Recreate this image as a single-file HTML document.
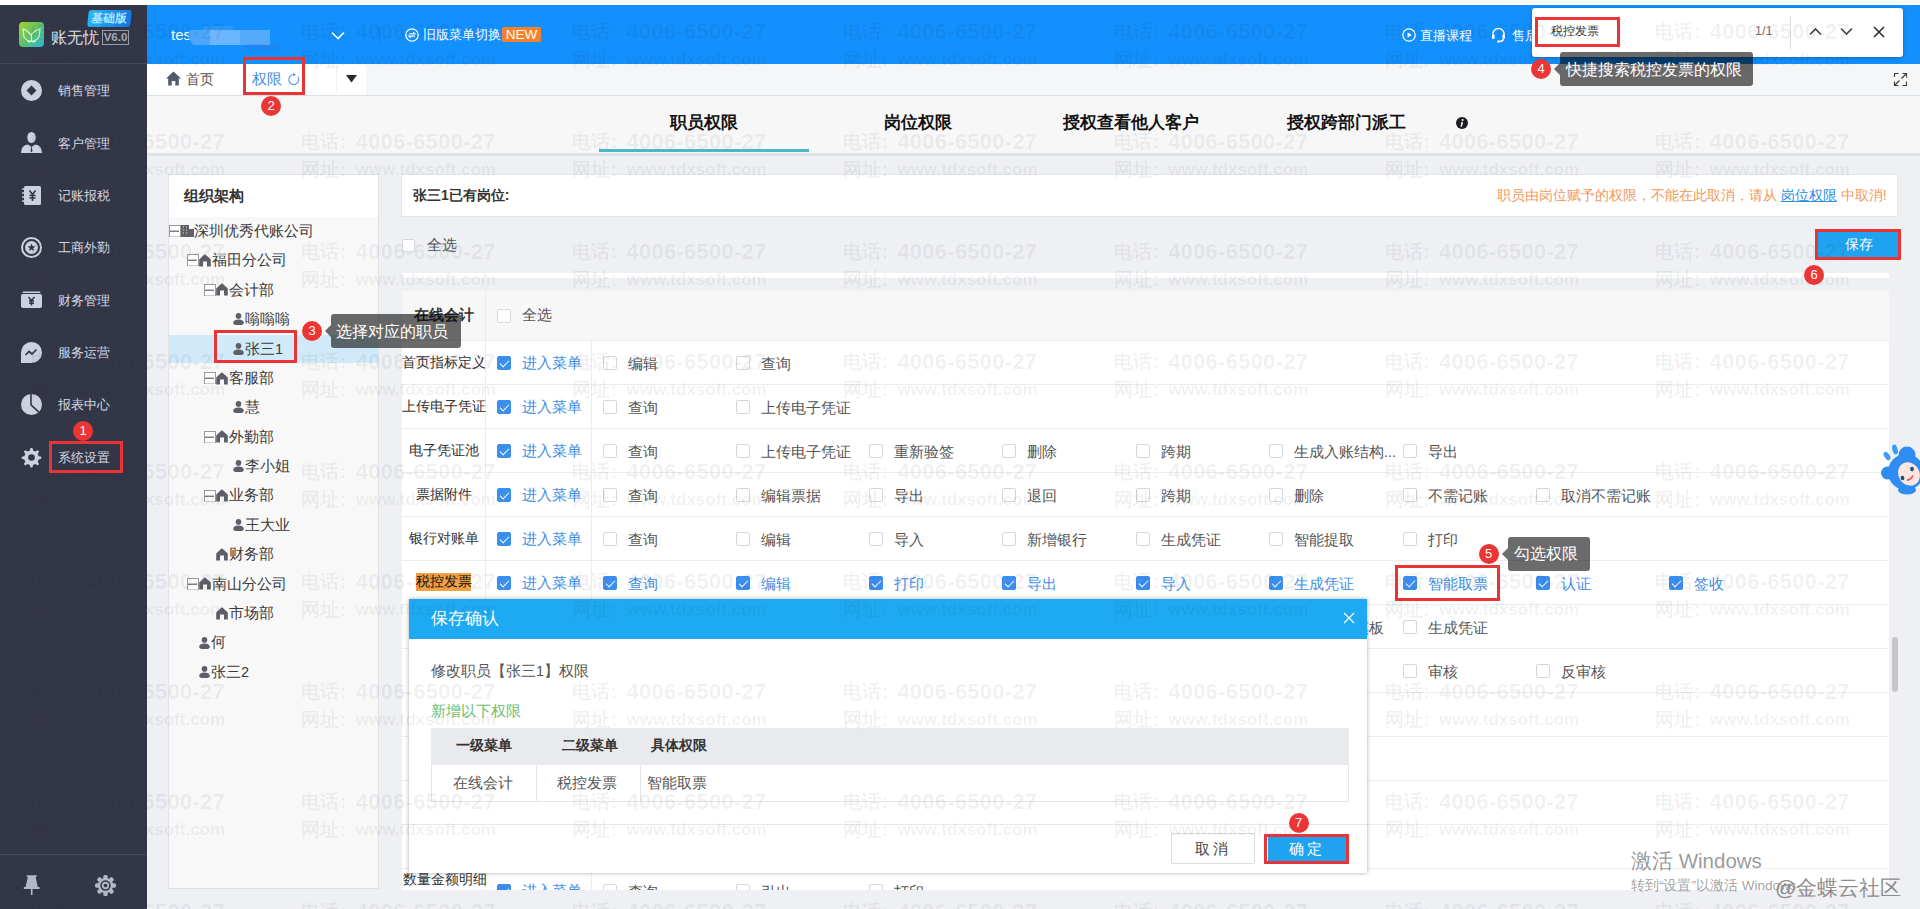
<!DOCTYPE html><html><head><meta charset="utf-8"><style>
*{box-sizing:border-box;margin:0;padding:0}
html,body{width:1920px;height:909px;overflow:hidden;background:#eef0f4;font-family:"Liberation Sans",sans-serif;color:#333;position:relative}
.a{position:absolute;white-space:nowrap}
.cb{position:absolute;width:14px;height:14px;border:1px solid #d3d6db;border-radius:2px;background:#fff}
.cb.on{background:#3b8ff0;border-color:#3b8ff0}
.cb.on::after{content:"";position:absolute;left:4px;top:1px;width:4px;height:8px;border:solid #fff;border-width:0 1.6px 1.6px 0;transform:rotate(45deg)}
.rb{position:absolute;border:3px solid #e83434}
.dot{position:absolute;width:20px;height:20px;border-radius:50%;background:#ec3535;color:#fff;font-size:13px;line-height:20px;text-align:center}
.tip{position:absolute;background:rgba(0,0,0,0.58);color:#fff;border-radius:3px;font-size:16px;line-height:32px;padding:0 0 0 6px;white-space:nowrap}
.tip::before{content:"";position:absolute;left:-6px;top:50%;margin-top:-6px;border:6px solid transparent;border-left:0;border-right-color:rgba(0,0,0,0.58)}
.wm{position:absolute;white-space:nowrap;color:rgba(0,0,0,0.075);pointer-events:none}
.t{position:absolute;white-space:nowrap;line-height:1}
</style></head><body>
<div class="a" style="left:0px;top:0px;width:1920px;height:5px;background:#fff;"></div>
<div class="a" style="left:0px;top:5px;width:147px;height:904px;background:#333646;"></div>
<div class="a" style="left:0px;top:63px;width:147px;height:1px;background:#454958;"></div>
<div class="a" style="left:0px;top:854px;width:147px;height:1px;background:#454958;"></div>
<div class="a" style="left:19px;top:22px;width:25px;height:25px;border-radius:4px;background:linear-gradient(135deg,#a6d42a,#5cc26a 50%,#2ab7d8)"></div>
<svg class="a" style="left:19px;top:22px" width="25" height="25" viewBox="0 0 25 25"><path d="M4 7 Q8 8 12 13 Q16 8 21 7 L20 15 Q16 20 12.5 19 Q9 20 5 15 Z M12.5 13 V19 M8 18 L10 20 L12.5 19 L15 20 L17 18" fill="none" stroke="#e9f7d0" stroke-width="1.1"/></svg>
<div class="a" style="left:51px;top:26.8px;height:22.4px;line-height:22.4px;font-size:16px;color:#dfe0e6;font-weight:normal;">账无忧</div>
<div class="a" style="left:102px;top:30px;width:27px;height:15px;border:1px solid #9a9ca8;color:#a9acb6;font-size:11.5px;line-height:13px;text-align:center;font-weight:bold">V6.0</div>
<div class="a" style="left:88px;top:10px;width:43px;height:17px;border-radius:3px;background:linear-gradient(100deg,#27b8f6,#1576df);color:#b5e6ff;font-size:11.5px;line-height:17px;text-align:center;font-weight:bold;transform:skewX(-6deg)">基础版</div>
<svg class="a" style="left:21px;top:80.0px" width="21" height="21" viewBox="0 0 21 21"><circle cx="10.5" cy="10.5" r="10.5" fill="#cdd1de"/><path d="M10.5 5.5 L15.5 10.5 L10.5 15.5 L5.5 10.5Z" fill="#333646"/></svg>
<div class="a" style="left:58px;top:83.0px;height:17.5px;line-height:17.5px;font-size:12.5px;color:#d5d9e5;font-weight:normal;">销售管理</div>
<svg class="a" style="left:21px;top:132.4px" width="21" height="21" viewBox="0 0 21 21"><ellipse cx="10.5" cy="5.5" rx="4.2" ry="5.5" fill="#cdd1de"/><path d="M0 21 Q0 13 7 12.5 L10.5 15 L14 12.5 Q21 13 21 21Z" fill="#cdd1de"/><path d="M10.5 13.5 L9.5 19 L10.5 20.5 L11.5 19Z" fill="#333646"/></svg>
<div class="a" style="left:58px;top:135.5px;height:17.5px;line-height:17.5px;font-size:12.5px;color:#d5d9e5;font-weight:normal;">客户管理</div>
<svg class="a" style="left:21px;top:184.8px" width="21" height="21" viewBox="0 0 21 21"><rect x="3" y="1" width="17" height="19" rx="1.5" fill="#cdd1de"/><path d="M1 4h4M1 8h4M1 12h4M1 16h4" stroke="#cdd1de" stroke-width="1.5"/><path d="M8.5 5.5 L11.5 9.5 L14.5 5.5 M11.5 9.5 V16 M8.5 10.5 H14.5 M8.5 13 H14.5" fill="none" stroke="#333646" stroke-width="1.6"/></svg>
<div class="a" style="left:58px;top:187.9px;height:17.5px;line-height:17.5px;font-size:12.5px;color:#d5d9e5;font-weight:normal;">记账报税</div>
<svg class="a" style="left:21px;top:237.2px" width="21" height="21" viewBox="0 0 21 21"><circle cx="10.5" cy="10.5" r="9.5" fill="none" stroke="#cdd1de" stroke-width="2"/><circle cx="10.5" cy="10.5" r="6.5" fill="#cdd1de"/><path d="M10.5 6.5 L11.6 9.3 L14.5 9.4 L12.2 11.2 L13 14 L10.5 12.4 L8 14 L8.8 11.2 L6.5 9.4 L9.4 9.3Z" fill="#333646"/></svg>
<div class="a" style="left:58px;top:240.2px;height:17.5px;line-height:17.5px;font-size:12.5px;color:#d5d9e5;font-weight:normal;">工商外勤</div>
<svg class="a" style="left:21px;top:289.6px" width="21" height="21" viewBox="0 0 21 21"><rect x="1.5" y="1.5" width="18" height="1.6" rx="0.8" fill="#cdd1de"/><rect x="0" y="4" width="21" height="14" rx="2" fill="#cdd1de"/><path d="M7.5 7 L10.5 10.5 L13.5 7 M10.5 10.5 V15.5 M8 11 H13 M8 13.3 H13" fill="none" stroke="#333646" stroke-width="1.5"/></svg>
<div class="a" style="left:58px;top:292.7px;height:17.5px;line-height:17.5px;font-size:12.5px;color:#d5d9e5;font-weight:normal;">财务管理</div>
<svg class="a" style="left:21px;top:342.0px" width="21" height="21" viewBox="0 0 21 21"><path d="M10.5 0 A10.5 10.5 0 1 1 10.5 21 H0 V10.5 A10.5 10.5 0 0 1 10.5 0Z" fill="#cdd1de"/><path d="M4.5 13 L8 9.5 L11 12 L15.5 7.5" fill="none" stroke="#333646" stroke-width="1.7"/></svg>
<div class="a" style="left:58px;top:345.1px;height:17.5px;line-height:17.5px;font-size:12.5px;color:#d5d9e5;font-weight:normal;">服务运营</div>
<svg class="a" style="left:21px;top:394.4px" width="21" height="21" viewBox="0 0 21 21"><circle cx="10.5" cy="10.5" r="10.5" fill="#cdd1de"/><path d="M10 0 V10.8 L17.8 18.2" fill="none" stroke="#333646" stroke-width="1.6"/></svg>
<div class="a" style="left:58px;top:397.4px;height:17.5px;line-height:17.5px;font-size:12.5px;color:#d5d9e5;font-weight:normal;">报表中心</div>
<svg class="a" style="left:21px;top:446.8px" width="21" height="21" viewBox="0 0 21 21"><path d="M10.5 1 l2 0 l0.6 2.6 l2.3 1 l2.3-1.4 l1.4 1.4 l-1.4 2.3 l1 2.3 l2.6 0.6 l0 2 l-2.6 0.6 l-1 2.3 l1.4 2.3 l-1.4 1.4 l-2.3-1.4 l-2.3 1 l-0.6 2.6 l-2 0 l-0.6-2.6 l-2.3-1 l-2.3 1.4 l-1.4-1.4 l1.4-2.3 l-1-2.3 l-2.6-0.6 l0-2 l2.6-0.6 l1-2.3 l-1.4-2.3 l1.4-1.4 l2.3 1.4 l2.3-1 Z" fill="#cdd1de" transform="translate(-1,0)"/><circle cx="10.5" cy="10.5" r="3.3" fill="#333646"/></svg>
<div class="a" style="left:58px;top:449.9px;height:17.5px;line-height:17.5px;font-size:12.5px;color:#d5d9e5;font-weight:normal;">系统设置</div>
<svg class="a" style="left:23px;top:874px" width="18" height="22" viewBox="0 0 18 22"><path d="M3.8 1.2 H13.6 V3 H12.6 L14.8 13 H16.6 V15 H0.8 V13 H2.6 L4.8 3 H3.8Z" fill="#b3b8c4"/><rect x="7.9" y="15" width="1.6" height="6" fill="#b3b8c4"/></svg>
<svg class="a" style="left:94.5px;top:875px" width="21" height="21" viewBox="0 0 21 21"><rect x="8.3" y="0" width="4.4" height="5" rx="1.6" transform="rotate(0 10.5 10.5)" fill="#b3b8c4"/><rect x="8.3" y="0" width="4.4" height="5" rx="1.6" transform="rotate(45 10.5 10.5)" fill="#b3b8c4"/><rect x="8.3" y="0" width="4.4" height="5" rx="1.6" transform="rotate(90 10.5 10.5)" fill="#b3b8c4"/><rect x="8.3" y="0" width="4.4" height="5" rx="1.6" transform="rotate(135 10.5 10.5)" fill="#b3b8c4"/><rect x="8.3" y="0" width="4.4" height="5" rx="1.6" transform="rotate(180 10.5 10.5)" fill="#b3b8c4"/><rect x="8.3" y="0" width="4.4" height="5" rx="1.6" transform="rotate(225 10.5 10.5)" fill="#b3b8c4"/><rect x="8.3" y="0" width="4.4" height="5" rx="1.6" transform="rotate(270 10.5 10.5)" fill="#b3b8c4"/><rect x="8.3" y="0" width="4.4" height="5" rx="1.6" transform="rotate(315 10.5 10.5)" fill="#b3b8c4"/><circle cx="10.5" cy="10.5" r="7.6" fill="#b3b8c4"/><circle cx="10.5" cy="10.5" r="5.2" fill="#333646"/><circle cx="10.5" cy="10.5" r="3.7" fill="#b3b8c4"/><circle cx="10.5" cy="10.5" r="1.8" fill="#333646"/></svg>
<div class="a" style="left:147px;top:5px;width:1773px;height:59px;background:#1290fd;"></div>
<div class="a" style="left:171px;top:25px;font-size:15px;line-height:20px;color:#fff">tes</div>
<div class="a" style="left:189px;top:30px;width:21px;height:15px;background:#4ea5fc;clip-path:polygon(0 0,100% 0,100% 100%,20% 100%,0 60%)"></div>
<div class="a" style="left:210px;top:30px;width:30px;height:15px;background:#6cb6fe;"></div>
<div class="a" style="left:240px;top:30px;width:30px;height:15px;background:#56aafc;"></div>
<div class="a" style="left:203px;top:26px;width:30px;height:4px;background:#2a97fd;"></div>
<div class="a" style="left:245px;top:45px;width:35px;height:4px;background:rgba(60,110,200,0.35);filter:blur(1.5px)"></div>
<svg class="a" style="left:331px;top:31px" width="14" height="9" viewBox="0 0 14 9"><path d="M1 1.5 L7 7.5 L13 1.5" fill="none" stroke="#fff" stroke-width="1.6"/></svg>
<div class="a" style="left:379px;top:27px;width:1px;height:15px;background:rgba(0,0,0,0.12);"></div>
<svg class="a" style="left:405px;top:27.5px" width="14" height="14" viewBox="0 0 14 14"><circle cx="7" cy="7" r="6.2" fill="none" stroke="#fff" stroke-width="1.3"/><path d="M4 5.8 H10 L8.3 4.2 M10 8.2 H4 L5.7 9.8" fill="none" stroke="#fff" stroke-width="1.2"/></svg>
<div class="a" style="left:423px;top:26.6px;height:17.8px;line-height:17.8px;font-size:12.7px;color:#fff;font-weight:normal;">旧版菜单切换</div>
<div class="a" style="left:502px;top:27px;width:39px;height:15px;background:#f5812a;border-radius:2px;color:#fff;font-size:13.5px;line-height:15px;text-align:center">NEW</div>
<svg class="a" style="left:1402px;top:28px" width="14" height="14" viewBox="0 0 14 14"><circle cx="7" cy="7" r="6.2" fill="none" stroke="#fff" stroke-width="1.3"/><path d="M5.5 4.3 L9.8 7 L5.5 9.7Z" fill="#fff"/></svg>
<div class="a" style="left:1420px;top:26.5px;height:17.9px;line-height:17.9px;font-size:12.8px;color:#fff;font-weight:normal;">直播课程</div>
<svg class="a" style="left:1491px;top:27px" width="15" height="16" viewBox="0 0 15 16"><path d="M2 9 V7 A5.5 5.5 0 0 1 13 7 V9" fill="none" stroke="#fff" stroke-width="1.4"/><rect x="1" y="7.5" width="2.6" height="4.5" rx="1" fill="#fff"/><rect x="11.4" y="7.5" width="2.6" height="4.5" rx="1" fill="#fff"/><path d="M12.5 12 Q12 14.5 8.5 14.5" fill="none" stroke="#fff" stroke-width="1.3"/><circle cx="7.5" cy="14.5" r="1.3" fill="#fff"/></svg>
<div class="a" style="left:1512px;top:26.5px;height:17.9px;line-height:17.9px;font-size:12.8px;color:#fff;font-weight:normal;">售后</div>
<div class="a" style="left:147px;top:64px;width:1773px;height:32px;background:#f5f6f8;"></div>
<div class="a" style="left:147px;top:64px;width:219px;height:31px;background:#fff;"></div>
<div class="a" style="left:147px;top:95px;width:1773px;height:1px;background:#dcdfe5;"></div>
<div class="a" style="left:336px;top:66px;width:1px;height:26px;background:#eef0f3;"></div>
<svg class="a" style="left:166px;top:71px" width="15" height="15" viewBox="0 0 15 15"><path d="M7.5 0.5 L15 7.5 H12.8 V14.5 H9.3 V10 H5.7 V14.5 H2.2 V7.5 H0Z" fill="#535b6a"/></svg>
<div class="a" style="left:186px;top:69.6px;height:19.9px;line-height:19.9px;font-size:14.2px;color:#555;font-weight:normal;">首页</div>
<div class="a" style="left:252px;top:69.3px;height:20.3px;line-height:20.3px;font-size:14.5px;color:#4a8fe0;font-weight:normal;">权限</div>
<svg class="a" style="left:287px;top:73px" width="13" height="13" viewBox="0 0 13 13"><path d="M10.8 3.5 A5 5 0 1 1 6.5 1.5" fill="none" stroke="#5d9ae6" stroke-width="1.2"/><path d="M6 0 L9 1.6 L6.2 3.6Z" fill="#5d9ae6"/></svg>
<svg class="a" style="left:346px;top:75px" width="11" height="8" viewBox="0 0 11 8"><path d="M0 0 H11 L5.5 7.5Z" fill="#2a2a2a"/></svg>
<svg class="a" style="left:1893px;top:72px" width="15" height="15" viewBox="0 0 15 15"><path d="M1.5 5 V1.5 H5.5 M9.5 1.5 H13.5 V5.5 M13.5 1.5 L8.5 6.5 M1.5 9.5 V13.5 H5.5 M1.5 13.5 L6.5 8.5 M13.5 9.5 V13.5 H9.5" fill="none" stroke="#3a3a3a" stroke-width="1.1"/></svg>
<div class="a" style="left:147px;top:96px;width:1773px;height:57px;background:#f7f7f8;"></div>
<div class="a" style="left:147px;top:153px;width:1773px;height:3px;background:#dfe3e9;"></div>
<div class="a" style="left:554px;top:110px;width:300px;text-align:center;font-size:16.5px;line-height:24px;font-weight:bold;color:#111">职员权限</div>
<div class="a" style="left:768px;top:110px;width:300px;text-align:center;font-size:16.5px;line-height:24px;font-weight:bold;color:#111">岗位权限</div>
<div class="a" style="left:981px;top:110px;width:300px;text-align:center;font-size:16.5px;line-height:24px;font-weight:bold;color:#111">授权查看他人客户</div>
<div class="a" style="left:1196px;top:110px;width:300px;text-align:center;font-size:16.5px;line-height:24px;font-weight:bold;color:#111">授权跨部门派工</div>
<div class="a" style="left:599px;top:149px;width:210px;height:3px;background:#4db7c7;"></div>
<svg class="a" style="left:1456px;top:116.7px" width="12" height="12" viewBox="0 0 12 12"><circle cx="6" cy="6" r="6" fill="#1e1e22"/><circle cx="6.6" cy="3.1" r="1" fill="#fff"/><path d="M6.3 5 L5.2 9.6" stroke="#fff" stroke-width="1.5"/></svg>
<div class="a" style="left:168px;top:174px;width:211px;height:715px;background:#f8f8f8;border:1px solid #dfe3e8"></div>
<div class="a" style="left:169px;top:175px;width:209px;height:42px;background:#fff;"></div>
<div class="a" style="left:184px;top:185.6px;height:20.7px;line-height:20.7px;font-size:14.8px;color:#333;font-weight:bold;">组织架构</div>
<div class="a" style="left:169px;top:335px;width:209px;height:28px;background:#d0eafa;"></div>
<svg class="a" style="left:169px;top:225.0px" width="12" height="12" viewBox="0 0 12 12"><rect x="0.5" y="0.5" width="11" height="11.5" fill="#fff" stroke="#9a9a9a" stroke-width="1"/><path d="M1 6.2 H10" stroke="#555" stroke-width="1.1"/></svg>
<svg class="a" style="left:181px;top:225.0px" width="13" height="12" viewBox="0 0 13 12"><rect x="0" y="0" width="8" height="12" fill="#5f6068"/><rect x="8" y="4" width="5" height="8" fill="#5f6068"/><path d="M2 2h1M5 2h1M2 5h1M5 5h1M2 8h1M5 8h1" stroke="#ddd" stroke-width="1"/></svg>
<div class="a" style="left:194px;top:220.8px;height:20.3px;line-height:20.3px;font-size:14.5px;color:#3a3a3a;font-weight:normal;">深圳优秀代账公司</div>
<svg class="a" style="left:187px;top:254.4px" width="12" height="12" viewBox="0 0 12 12"><rect x="0.5" y="0.5" width="11" height="11.5" fill="#fff" stroke="#9a9a9a" stroke-width="1"/><path d="M1 6.2 H10" stroke="#555" stroke-width="1.1"/></svg>
<svg class="a" style="left:198.5px;top:253.9px" width="12" height="13" viewBox="0 0 12 13"><path d="M5.2 0.8 Q5.9 0.2 6.6 0.8 L11.8 5.6 V12.5 H8 V7.6 H4 V12.5 H0.2 V5.6Z" fill="#5d5f66"/></svg>
<div class="a" style="left:212px;top:250.2px;height:20.3px;line-height:20.3px;font-size:14.5px;color:#3a3a3a;font-weight:normal;">福田分公司</div>
<svg class="a" style="left:204px;top:283.8px" width="12" height="12" viewBox="0 0 12 12"><rect x="0.5" y="0.5" width="11" height="11.5" fill="#fff" stroke="#9a9a9a" stroke-width="1"/><path d="M1 6.2 H10" stroke="#555" stroke-width="1.1"/></svg>
<svg class="a" style="left:215.5px;top:283.3px" width="12" height="13" viewBox="0 0 12 13"><path d="M5.2 0.8 Q5.9 0.2 6.6 0.8 L11.8 5.6 V12.5 H8 V7.6 H4 V12.5 H0.2 V5.6Z" fill="#5d5f66"/></svg>
<div class="a" style="left:229px;top:279.7px;height:20.3px;line-height:20.3px;font-size:14.5px;color:#3a3a3a;font-weight:normal;">会计部</div>
<svg class="a" style="left:233px;top:313.2px" width="11" height="12" viewBox="0 0 11 12"><circle cx="5.5" cy="2.9" r="2.8" fill="#5d5f66"/><path d="M0.2 10 Q0.2 6.4 5.5 6.4 Q10.8 6.4 10.8 10 Q10.8 12.3 5.5 12.3 Q0.2 12.3 0.2 10Z" fill="#5d5f66"/></svg>
<div class="a" style="left:245px;top:309.1px;height:20.3px;line-height:20.3px;font-size:14.5px;color:#3a3a3a;font-weight:normal;">嗡嗡嗡</div>
<svg class="a" style="left:233px;top:342.6px" width="11" height="12" viewBox="0 0 11 12"><circle cx="5.5" cy="2.9" r="2.8" fill="#5d5f66"/><path d="M0.2 10 Q0.2 6.4 5.5 6.4 Q10.8 6.4 10.8 10 Q10.8 12.3 5.5 12.3 Q0.2 12.3 0.2 10Z" fill="#5d5f66"/></svg>
<div class="a" style="left:245px;top:338.5px;height:20.3px;line-height:20.3px;font-size:14.5px;color:#3a3a3a;font-weight:normal;">张三1</div>
<svg class="a" style="left:204px;top:372.0px" width="12" height="12" viewBox="0 0 12 12"><rect x="0.5" y="0.5" width="11" height="11.5" fill="#fff" stroke="#9a9a9a" stroke-width="1"/><path d="M1 6.2 H10" stroke="#555" stroke-width="1.1"/></svg>
<svg class="a" style="left:215.5px;top:371.5px" width="12" height="13" viewBox="0 0 12 13"><path d="M5.2 0.8 Q5.9 0.2 6.6 0.8 L11.8 5.6 V12.5 H8 V7.6 H4 V12.5 H0.2 V5.6Z" fill="#5d5f66"/></svg>
<div class="a" style="left:229px;top:367.9px;height:20.3px;line-height:20.3px;font-size:14.5px;color:#3a3a3a;font-weight:normal;">客服部</div>
<svg class="a" style="left:233px;top:401.4px" width="11" height="12" viewBox="0 0 11 12"><circle cx="5.5" cy="2.9" r="2.8" fill="#5d5f66"/><path d="M0.2 10 Q0.2 6.4 5.5 6.4 Q10.8 6.4 10.8 10 Q10.8 12.3 5.5 12.3 Q0.2 12.3 0.2 10Z" fill="#5d5f66"/></svg>
<div class="a" style="left:245px;top:397.2px;height:20.3px;line-height:20.3px;font-size:14.5px;color:#3a3a3a;font-weight:normal;">慧</div>
<svg class="a" style="left:204px;top:430.8px" width="12" height="12" viewBox="0 0 12 12"><rect x="0.5" y="0.5" width="11" height="11.5" fill="#fff" stroke="#9a9a9a" stroke-width="1"/><path d="M1 6.2 H10" stroke="#555" stroke-width="1.1"/></svg>
<svg class="a" style="left:215.5px;top:430.3px" width="12" height="13" viewBox="0 0 12 13"><path d="M5.2 0.8 Q5.9 0.2 6.6 0.8 L11.8 5.6 V12.5 H8 V7.6 H4 V12.5 H0.2 V5.6Z" fill="#5d5f66"/></svg>
<div class="a" style="left:229px;top:426.6px;height:20.3px;line-height:20.3px;font-size:14.5px;color:#3a3a3a;font-weight:normal;">外勤部</div>
<svg class="a" style="left:233px;top:460.2px" width="11" height="12" viewBox="0 0 11 12"><circle cx="5.5" cy="2.9" r="2.8" fill="#5d5f66"/><path d="M0.2 10 Q0.2 6.4 5.5 6.4 Q10.8 6.4 10.8 10 Q10.8 12.3 5.5 12.3 Q0.2 12.3 0.2 10Z" fill="#5d5f66"/></svg>
<div class="a" style="left:245px;top:456.1px;height:20.3px;line-height:20.3px;font-size:14.5px;color:#3a3a3a;font-weight:normal;">李小姐</div>
<svg class="a" style="left:204px;top:489.6px" width="12" height="12" viewBox="0 0 12 12"><rect x="0.5" y="0.5" width="11" height="11.5" fill="#fff" stroke="#9a9a9a" stroke-width="1"/><path d="M1 6.2 H10" stroke="#555" stroke-width="1.1"/></svg>
<svg class="a" style="left:215.5px;top:489.1px" width="12" height="13" viewBox="0 0 12 13"><path d="M5.2 0.8 Q5.9 0.2 6.6 0.8 L11.8 5.6 V12.5 H8 V7.6 H4 V12.5 H0.2 V5.6Z" fill="#5d5f66"/></svg>
<div class="a" style="left:229px;top:485.4px;height:20.3px;line-height:20.3px;font-size:14.5px;color:#3a3a3a;font-weight:normal;">业务部</div>
<svg class="a" style="left:233px;top:519.0px" width="11" height="12" viewBox="0 0 11 12"><circle cx="5.5" cy="2.9" r="2.8" fill="#5d5f66"/><path d="M0.2 10 Q0.2 6.4 5.5 6.4 Q10.8 6.4 10.8 10 Q10.8 12.3 5.5 12.3 Q0.2 12.3 0.2 10Z" fill="#5d5f66"/></svg>
<div class="a" style="left:245px;top:514.9px;height:20.3px;line-height:20.3px;font-size:14.5px;color:#3a3a3a;font-weight:normal;">王大业</div>
<svg class="a" style="left:215.5px;top:547.9px" width="12" height="13" viewBox="0 0 12 13"><path d="M5.2 0.8 Q5.9 0.2 6.6 0.8 L11.8 5.6 V12.5 H8 V7.6 H4 V12.5 H0.2 V5.6Z" fill="#5d5f66"/></svg>
<div class="a" style="left:229px;top:544.2px;height:20.3px;line-height:20.3px;font-size:14.5px;color:#3a3a3a;font-weight:normal;">财务部</div>
<svg class="a" style="left:187px;top:577.8px" width="12" height="12" viewBox="0 0 12 12"><rect x="0.5" y="0.5" width="11" height="11.5" fill="#fff" stroke="#9a9a9a" stroke-width="1"/><path d="M1 6.2 H10" stroke="#555" stroke-width="1.1"/></svg>
<svg class="a" style="left:198.5px;top:577.3px" width="12" height="13" viewBox="0 0 12 13"><path d="M5.2 0.8 Q5.9 0.2 6.6 0.8 L11.8 5.6 V12.5 H8 V7.6 H4 V12.5 H0.2 V5.6Z" fill="#5d5f66"/></svg>
<div class="a" style="left:212px;top:573.6px;height:20.3px;line-height:20.3px;font-size:14.5px;color:#3a3a3a;font-weight:normal;">南山分公司</div>
<svg class="a" style="left:215.5px;top:606.7px" width="12" height="13" viewBox="0 0 12 13"><path d="M5.2 0.8 Q5.9 0.2 6.6 0.8 L11.8 5.6 V12.5 H8 V7.6 H4 V12.5 H0.2 V5.6Z" fill="#5d5f66"/></svg>
<div class="a" style="left:229px;top:603.1px;height:20.3px;line-height:20.3px;font-size:14.5px;color:#3a3a3a;font-weight:normal;">市场部</div>
<svg class="a" style="left:199px;top:636.6px" width="11" height="12" viewBox="0 0 11 12"><circle cx="5.5" cy="2.9" r="2.8" fill="#5d5f66"/><path d="M0.2 10 Q0.2 6.4 5.5 6.4 Q10.8 6.4 10.8 10 Q10.8 12.3 5.5 12.3 Q0.2 12.3 0.2 10Z" fill="#5d5f66"/></svg>
<div class="a" style="left:211px;top:632.4px;height:20.3px;line-height:20.3px;font-size:14.5px;color:#3a3a3a;font-weight:normal;">何</div>
<svg class="a" style="left:199px;top:666.0px" width="11" height="12" viewBox="0 0 11 12"><circle cx="5.5" cy="2.9" r="2.8" fill="#5d5f66"/><path d="M0.2 10 Q0.2 6.4 5.5 6.4 Q10.8 6.4 10.8 10 Q10.8 12.3 5.5 12.3 Q0.2 12.3 0.2 10Z" fill="#5d5f66"/></svg>
<div class="a" style="left:211px;top:661.9px;height:20.3px;line-height:20.3px;font-size:14.5px;color:#3a3a3a;font-weight:normal;">张三2</div>
<div class="a" style="left:401px;top:174px;width:1497px;height:43px;background:#fff;border:1px solid #e3e6ea"></div>
<div class="a" style="left:413px;top:186.2px;height:19.6px;line-height:19.6px;font-size:14px;color:#333;font-weight:bold;">张三1已有岗位:</div>
<div class="a" style="left:1497px;top:186px;font-size:13.8px;line-height:20px;color:#f09a5a">职员由岗位赋予的权限，不能在此取消，请从 <span style="color:#2a8de0;text-decoration:underline">岗位权限</span> 中取消!</div>
<div class="cb" style="left:402px;top:239px;width:13px;height:13px"></div>
<div class="a" style="left:427px;top:234.8px;height:20.3px;line-height:20.3px;font-size:14.5px;color:#555;font-weight:normal;">全选</div>
<div class="a" style="left:1817px;top:230px;width:83px;height:29px;background:#1fa3f0;color:#fff;font-size:14px;line-height:29px;text-align:center">保存</div>
<div class="a" style="left:402px;top:273px;width:1487px;height:5px;background:#fff"></div>
<div class="a" style="left:485px;top:273px;width:1px;height:5px;background:#ececec;"></div>
<div class="a" style="left:402px;top:291px;width:1487px;height:50px;background:#f7f7f8;"></div>
<div class="a" style="left:485px;top:291px;width:1px;height:50px;background:#ececec;"></div>
<div class="a" style="left:414px;top:304.9px;height:20.3px;line-height:20.3px;font-size:14.5px;color:#333;font-weight:bold;">在线会计</div>
<div class="cb" style="left:497px;top:309px;width:13.5px;height:13.5px"></div>
<div class="a" style="left:522px;top:304.9px;height:20.3px;line-height:20.3px;font-size:14.5px;color:#555;font-weight:normal;">全选</div>
<div class="a" style="left:402px;top:340px;width:1487px;height:44px;background:#fff;"></div>
<div class="a" style="left:402px;top:340px;width:1487px;height:1px;background:#ececec;"></div>
<div class="a" style="left:485px;top:340px;width:1px;height:44px;background:#ececec;"></div>
<div class="a" style="left:591px;top:340px;width:1px;height:44px;background:#ececec;"></div>
<div class="a" style="left:402px;top:352.5px;width:83px;text-align:center;font-size:13.5px;line-height:20px;color:#333">首页指标定义</div>
<div class="cb on" style="left:497px;top:356.0px"></div>
<div class="a" style="left:522px;top:352.9px;height:20.3px;line-height:20.3px;font-size:14.5px;color:#3f8fe6;font-weight:normal;">进入菜单</div>
<div class="cb" style="left:603px;top:356.0px"></div>
<div class="a" style="left:628px;top:354.4px;height:20.3px;line-height:20.3px;font-size:14.5px;color:#555;font-weight:normal;">编辑</div>
<div class="cb" style="left:736px;top:356.0px"></div>
<div class="a" style="left:761px;top:354.4px;height:20.3px;line-height:20.3px;font-size:14.5px;color:#555;font-weight:normal;">查询</div>
<div class="a" style="left:402px;top:384px;width:1487px;height:44px;background:#fff;"></div>
<div class="a" style="left:402px;top:384px;width:1487px;height:1px;background:#ececec;"></div>
<div class="a" style="left:485px;top:384px;width:1px;height:44px;background:#ececec;"></div>
<div class="a" style="left:591px;top:384px;width:1px;height:44px;background:#ececec;"></div>
<div class="a" style="left:402px;top:396.5px;width:83px;text-align:center;font-size:13.5px;line-height:20px;color:#333">上传电子凭证</div>
<div class="cb on" style="left:497px;top:400.0px"></div>
<div class="a" style="left:522px;top:396.9px;height:20.3px;line-height:20.3px;font-size:14.5px;color:#3f8fe6;font-weight:normal;">进入菜单</div>
<div class="cb" style="left:603px;top:400.0px"></div>
<div class="a" style="left:628px;top:398.4px;height:20.3px;line-height:20.3px;font-size:14.5px;color:#555;font-weight:normal;">查询</div>
<div class="cb" style="left:736px;top:400.0px"></div>
<div class="a" style="left:761px;top:398.4px;height:20.3px;line-height:20.3px;font-size:14.5px;color:#555;font-weight:normal;">上传电子凭证</div>
<div class="a" style="left:402px;top:428px;width:1487px;height:44px;background:#fff;"></div>
<div class="a" style="left:402px;top:428px;width:1487px;height:1px;background:#ececec;"></div>
<div class="a" style="left:485px;top:428px;width:1px;height:44px;background:#ececec;"></div>
<div class="a" style="left:591px;top:428px;width:1px;height:44px;background:#ececec;"></div>
<div class="a" style="left:402px;top:440.5px;width:83px;text-align:center;font-size:13.5px;line-height:20px;color:#333">电子凭证池</div>
<div class="cb on" style="left:497px;top:444.0px"></div>
<div class="a" style="left:522px;top:440.9px;height:20.3px;line-height:20.3px;font-size:14.5px;color:#3f8fe6;font-weight:normal;">进入菜单</div>
<div class="cb" style="left:603px;top:444.0px"></div>
<div class="a" style="left:628px;top:442.4px;height:20.3px;line-height:20.3px;font-size:14.5px;color:#555;font-weight:normal;">查询</div>
<div class="cb" style="left:736px;top:444.0px"></div>
<div class="a" style="left:761px;top:442.4px;height:20.3px;line-height:20.3px;font-size:14.5px;color:#555;font-weight:normal;">上传电子凭证</div>
<div class="cb" style="left:869px;top:444.0px"></div>
<div class="a" style="left:894px;top:442.4px;height:20.3px;line-height:20.3px;font-size:14.5px;color:#555;font-weight:normal;">重新验签</div>
<div class="cb" style="left:1002px;top:444.0px"></div>
<div class="a" style="left:1027px;top:442.4px;height:20.3px;line-height:20.3px;font-size:14.5px;color:#555;font-weight:normal;">删除</div>
<div class="cb" style="left:1136px;top:444.0px"></div>
<div class="a" style="left:1161px;top:442.4px;height:20.3px;line-height:20.3px;font-size:14.5px;color:#555;font-weight:normal;">跨期</div>
<div class="cb" style="left:1269px;top:444.0px"></div>
<div class="a" style="left:1294px;top:442.4px;height:20.3px;line-height:20.3px;font-size:14.5px;color:#555;font-weight:normal;">生成入账结构...</div>
<div class="cb" style="left:1403px;top:444.0px"></div>
<div class="a" style="left:1428px;top:442.4px;height:20.3px;line-height:20.3px;font-size:14.5px;color:#555;font-weight:normal;">导出</div>
<div class="a" style="left:402px;top:472px;width:1487px;height:44px;background:#fff;"></div>
<div class="a" style="left:402px;top:472px;width:1487px;height:1px;background:#ececec;"></div>
<div class="a" style="left:485px;top:472px;width:1px;height:44px;background:#ececec;"></div>
<div class="a" style="left:591px;top:472px;width:1px;height:44px;background:#ececec;"></div>
<div class="a" style="left:402px;top:484.5px;width:83px;text-align:center;font-size:13.5px;line-height:20px;color:#333">票据附件</div>
<div class="cb on" style="left:497px;top:488.0px"></div>
<div class="a" style="left:522px;top:484.9px;height:20.3px;line-height:20.3px;font-size:14.5px;color:#3f8fe6;font-weight:normal;">进入菜单</div>
<div class="cb" style="left:603px;top:488.0px"></div>
<div class="a" style="left:628px;top:486.4px;height:20.3px;line-height:20.3px;font-size:14.5px;color:#555;font-weight:normal;">查询</div>
<div class="cb" style="left:736px;top:488.0px"></div>
<div class="a" style="left:761px;top:486.4px;height:20.3px;line-height:20.3px;font-size:14.5px;color:#555;font-weight:normal;">编辑票据</div>
<div class="cb" style="left:869px;top:488.0px"></div>
<div class="a" style="left:894px;top:486.4px;height:20.3px;line-height:20.3px;font-size:14.5px;color:#555;font-weight:normal;">导出</div>
<div class="cb" style="left:1002px;top:488.0px"></div>
<div class="a" style="left:1027px;top:486.4px;height:20.3px;line-height:20.3px;font-size:14.5px;color:#555;font-weight:normal;">退回</div>
<div class="cb" style="left:1136px;top:488.0px"></div>
<div class="a" style="left:1161px;top:486.4px;height:20.3px;line-height:20.3px;font-size:14.5px;color:#555;font-weight:normal;">跨期</div>
<div class="cb" style="left:1269px;top:488.0px"></div>
<div class="a" style="left:1294px;top:486.4px;height:20.3px;line-height:20.3px;font-size:14.5px;color:#555;font-weight:normal;">删除</div>
<div class="cb" style="left:1403px;top:488.0px"></div>
<div class="a" style="left:1428px;top:486.4px;height:20.3px;line-height:20.3px;font-size:14.5px;color:#555;font-weight:normal;">不需记账</div>
<div class="cb" style="left:1536px;top:488.0px"></div>
<div class="a" style="left:1561px;top:486.4px;height:20.3px;line-height:20.3px;font-size:14.5px;color:#555;font-weight:normal;">取消不需记账</div>
<div class="a" style="left:402px;top:516px;width:1487px;height:44px;background:#fff;"></div>
<div class="a" style="left:402px;top:516px;width:1487px;height:1px;background:#ececec;"></div>
<div class="a" style="left:485px;top:516px;width:1px;height:44px;background:#ececec;"></div>
<div class="a" style="left:591px;top:516px;width:1px;height:44px;background:#ececec;"></div>
<div class="a" style="left:402px;top:528.5px;width:83px;text-align:center;font-size:13.5px;line-height:20px;color:#333">银行对账单</div>
<div class="cb on" style="left:497px;top:532.0px"></div>
<div class="a" style="left:522px;top:528.9px;height:20.3px;line-height:20.3px;font-size:14.5px;color:#3f8fe6;font-weight:normal;">进入菜单</div>
<div class="cb" style="left:603px;top:532.0px"></div>
<div class="a" style="left:628px;top:530.4px;height:20.3px;line-height:20.3px;font-size:14.5px;color:#555;font-weight:normal;">查询</div>
<div class="cb" style="left:736px;top:532.0px"></div>
<div class="a" style="left:761px;top:530.4px;height:20.3px;line-height:20.3px;font-size:14.5px;color:#555;font-weight:normal;">编辑</div>
<div class="cb" style="left:869px;top:532.0px"></div>
<div class="a" style="left:894px;top:530.4px;height:20.3px;line-height:20.3px;font-size:14.5px;color:#555;font-weight:normal;">导入</div>
<div class="cb" style="left:1002px;top:532.0px"></div>
<div class="a" style="left:1027px;top:530.4px;height:20.3px;line-height:20.3px;font-size:14.5px;color:#555;font-weight:normal;">新增银行</div>
<div class="cb" style="left:1136px;top:532.0px"></div>
<div class="a" style="left:1161px;top:530.4px;height:20.3px;line-height:20.3px;font-size:14.5px;color:#555;font-weight:normal;">生成凭证</div>
<div class="cb" style="left:1269px;top:532.0px"></div>
<div class="a" style="left:1294px;top:530.4px;height:20.3px;line-height:20.3px;font-size:14.5px;color:#555;font-weight:normal;">智能提取</div>
<div class="cb" style="left:1403px;top:532.0px"></div>
<div class="a" style="left:1428px;top:530.4px;height:20.3px;line-height:20.3px;font-size:14.5px;color:#555;font-weight:normal;">打印</div>
<div class="a" style="left:402px;top:560px;width:1487px;height:44px;background:#fff;"></div>
<div class="a" style="left:402px;top:560px;width:1487px;height:1px;background:#ececec;"></div>
<div class="a" style="left:485px;top:560px;width:1px;height:44px;background:#ececec;"></div>
<div class="a" style="left:591px;top:560px;width:1px;height:44px;background:#ececec;"></div>
<div class="a" style="left:416px;top:573px;width:55px;height:18px;background:#f3a145"></div>
<div class="a" style="left:416px;top:573.0px;height:18.9px;line-height:18.9px;font-size:13.5px;color:#111;font-weight:normal;">税控发票</div>
<div class="cb on" style="left:497px;top:576.0px"></div>
<div class="a" style="left:522px;top:572.9px;height:20.3px;line-height:20.3px;font-size:14.5px;color:#3f8fe6;font-weight:normal;">进入菜单</div>
<div class="cb on" style="left:603px;top:576.0px"></div>
<div class="a" style="left:628px;top:574.4px;height:20.3px;line-height:20.3px;font-size:14.5px;color:#3f8fe6;font-weight:normal;">查询</div>
<div class="cb on" style="left:736px;top:576.0px"></div>
<div class="a" style="left:761px;top:574.4px;height:20.3px;line-height:20.3px;font-size:14.5px;color:#3f8fe6;font-weight:normal;">编辑</div>
<div class="cb on" style="left:869px;top:576.0px"></div>
<div class="a" style="left:894px;top:574.4px;height:20.3px;line-height:20.3px;font-size:14.5px;color:#3f8fe6;font-weight:normal;">打印</div>
<div class="cb on" style="left:1002px;top:576.0px"></div>
<div class="a" style="left:1027px;top:574.4px;height:20.3px;line-height:20.3px;font-size:14.5px;color:#3f8fe6;font-weight:normal;">导出</div>
<div class="cb on" style="left:1136px;top:576.0px"></div>
<div class="a" style="left:1161px;top:574.4px;height:20.3px;line-height:20.3px;font-size:14.5px;color:#3f8fe6;font-weight:normal;">导入</div>
<div class="cb on" style="left:1269px;top:576.0px"></div>
<div class="a" style="left:1294px;top:574.4px;height:20.3px;line-height:20.3px;font-size:14.5px;color:#3f8fe6;font-weight:normal;">生成凭证</div>
<div class="cb on" style="left:1403px;top:576.0px"></div>
<div class="a" style="left:1428px;top:574.4px;height:20.3px;line-height:20.3px;font-size:14.5px;color:#3f8fe6;font-weight:normal;">智能取票</div>
<div class="cb on" style="left:1536px;top:576.0px"></div>
<div class="a" style="left:1561px;top:574.4px;height:20.3px;line-height:20.3px;font-size:14.5px;color:#3f8fe6;font-weight:normal;">认证</div>
<div class="cb on" style="left:1669px;top:576.0px"></div>
<div class="a" style="left:1694px;top:574.4px;height:20.3px;line-height:20.3px;font-size:14.5px;color:#3f8fe6;font-weight:normal;">签收</div>
<div class="a" style="left:402px;top:604px;width:1487px;height:44px;background:#fff;"></div>
<div class="a" style="left:402px;top:604px;width:1487px;height:1px;background:#ececec;"></div>
<div class="a" style="left:485px;top:604px;width:1px;height:44px;background:#ececec;"></div>
<div class="a" style="left:591px;top:604px;width:1px;height:44px;background:#ececec;"></div>
<div class="a" style="left:402px;top:616.5px;width:83px;text-align:center;font-size:13.5px;line-height:20px;color:#333">增值税发票</div>
<div class="cb on" style="left:497px;top:620.0px"></div>
<div class="a" style="left:522px;top:616.9px;height:20.3px;line-height:20.3px;font-size:14.5px;color:#3f8fe6;font-weight:normal;">进入菜单</div>
<div class="cb" style="left:603px;top:620.0px"></div>
<div class="a" style="left:628px;top:618.4px;height:20.3px;line-height:20.3px;font-size:14.5px;color:#555;font-weight:normal;">查询</div>
<div class="cb" style="left:736px;top:620.0px"></div>
<div class="a" style="left:761px;top:618.4px;height:20.3px;line-height:20.3px;font-size:14.5px;color:#555;font-weight:normal;">编辑</div>
<div class="cb" style="left:869px;top:620.0px"></div>
<div class="a" style="left:894px;top:618.4px;height:20.3px;line-height:20.3px;font-size:14.5px;color:#555;font-weight:normal;">导入</div>
<div class="cb" style="left:1002px;top:620.0px"></div>
<div class="a" style="left:1027px;top:618.4px;height:20.3px;line-height:20.3px;font-size:14.5px;color:#555;font-weight:normal;">导出</div>
<div class="cb" style="left:1136px;top:620.0px"></div>
<div class="a" style="left:1161px;top:618.4px;height:20.3px;line-height:20.3px;font-size:14.5px;color:#555;font-weight:normal;">删除</div>
<div class="cb" style="left:1269px;top:620.0px"></div>
<div class="a" style="left:1294px;top:618.4px;height:20.3px;line-height:20.3px;font-size:14.5px;color:#555;font-weight:normal;">生成凭证模板</div>
<div class="cb" style="left:1403px;top:620.0px"></div>
<div class="a" style="left:1428px;top:618.4px;height:20.3px;line-height:20.3px;font-size:14.5px;color:#555;font-weight:normal;">生成凭证</div>
<div class="a" style="left:402px;top:648px;width:1487px;height:44px;background:#fff;"></div>
<div class="a" style="left:402px;top:648px;width:1487px;height:1px;background:#ececec;"></div>
<div class="a" style="left:485px;top:648px;width:1px;height:44px;background:#ececec;"></div>
<div class="a" style="left:591px;top:648px;width:1px;height:44px;background:#ececec;"></div>
<div class="a" style="left:402px;top:660.5px;width:83px;text-align:center;font-size:13.5px;line-height:20px;color:#333">凭证</div>
<div class="cb on" style="left:497px;top:664.0px"></div>
<div class="a" style="left:522px;top:660.9px;height:20.3px;line-height:20.3px;font-size:14.5px;color:#3f8fe6;font-weight:normal;">进入菜单</div>
<div class="cb" style="left:603px;top:664.0px"></div>
<div class="a" style="left:628px;top:662.4px;height:20.3px;line-height:20.3px;font-size:14.5px;color:#555;font-weight:normal;">查询</div>
<div class="cb" style="left:736px;top:664.0px"></div>
<div class="a" style="left:761px;top:662.4px;height:20.3px;line-height:20.3px;font-size:14.5px;color:#555;font-weight:normal;">编辑</div>
<div class="cb" style="left:869px;top:664.0px"></div>
<div class="a" style="left:894px;top:662.4px;height:20.3px;line-height:20.3px;font-size:14.5px;color:#555;font-weight:normal;">导入</div>
<div class="cb" style="left:1002px;top:664.0px"></div>
<div class="a" style="left:1027px;top:662.4px;height:20.3px;line-height:20.3px;font-size:14.5px;color:#555;font-weight:normal;">导出</div>
<div class="cb" style="left:1136px;top:664.0px"></div>
<div class="a" style="left:1161px;top:662.4px;height:20.3px;line-height:20.3px;font-size:14.5px;color:#555;font-weight:normal;">删除</div>
<div class="cb" style="left:1269px;top:664.0px"></div>
<div class="a" style="left:1294px;top:662.4px;height:20.3px;line-height:20.3px;font-size:14.5px;color:#555;font-weight:normal;">打印</div>
<div class="cb" style="left:1403px;top:664.0px"></div>
<div class="a" style="left:1428px;top:662.4px;height:20.3px;line-height:20.3px;font-size:14.5px;color:#555;font-weight:normal;">审核</div>
<div class="cb" style="left:1536px;top:664.0px"></div>
<div class="a" style="left:1561px;top:662.4px;height:20.3px;line-height:20.3px;font-size:14.5px;color:#555;font-weight:normal;">反审核</div>
<div class="a" style="left:402px;top:692px;width:1487px;height:44px;background:#fff;"></div>
<div class="a" style="left:402px;top:692px;width:1487px;height:1px;background:#ececec;"></div>
<div class="a" style="left:485px;top:692px;width:1px;height:44px;background:#ececec;"></div>
<div class="a" style="left:591px;top:692px;width:1px;height:44px;background:#ececec;"></div>
<div class="a" style="left:402px;top:736px;width:1487px;height:44px;background:#fff;"></div>
<div class="a" style="left:402px;top:736px;width:1487px;height:1px;background:#ececec;"></div>
<div class="a" style="left:485px;top:736px;width:1px;height:44px;background:#ececec;"></div>
<div class="a" style="left:591px;top:736px;width:1px;height:44px;background:#ececec;"></div>
<div class="a" style="left:402px;top:780px;width:1487px;height:44px;background:#fff;"></div>
<div class="a" style="left:402px;top:780px;width:1487px;height:1px;background:#ececec;"></div>
<div class="a" style="left:485px;top:780px;width:1px;height:44px;background:#ececec;"></div>
<div class="a" style="left:591px;top:780px;width:1px;height:44px;background:#ececec;"></div>
<div class="a" style="left:402px;top:824px;width:1487px;height:44px;background:#fff;"></div>
<div class="a" style="left:402px;top:824px;width:1487px;height:1px;background:#ececec;"></div>
<div class="a" style="left:485px;top:824px;width:1px;height:44px;background:#ececec;"></div>
<div class="a" style="left:591px;top:824px;width:1px;height:44px;background:#ececec;"></div>
<div class="a" style="left:402px;top:868px;width:1487px;height:22px;background:#fff;"></div>
<div class="a" style="left:402px;top:868px;width:1487px;height:1px;background:#ececec;"></div>
<div class="a" style="left:485px;top:868px;width:1px;height:22px;background:#ececec;"></div>
<div class="a" style="left:591px;top:868px;width:1px;height:22px;background:#ececec;"></div>
<div class="a" style="left:403px;top:871.0px;height:18.9px;line-height:18.9px;font-size:13.5px;color:#333;font-weight:normal;">数量金额明细</div>
<div class="cb on" style="left:497px;top:884.0px"></div>
<div class="a" style="left:522px;top:880.9px;height:20.3px;line-height:20.3px;font-size:14.5px;color:#3f8fe6;font-weight:normal;">进入菜单</div>
<div class="cb" style="left:603px;top:884.0px"></div>
<div class="a" style="left:628px;top:882.4px;height:20.3px;line-height:20.3px;font-size:14.5px;color:#555;font-weight:normal;">查询</div>
<div class="cb" style="left:736px;top:884.0px"></div>
<div class="a" style="left:761px;top:882.4px;height:20.3px;line-height:20.3px;font-size:14.5px;color:#555;font-weight:normal;">引出</div>
<div class="cb" style="left:869px;top:884.0px"></div>
<div class="a" style="left:894px;top:882.4px;height:20.3px;line-height:20.3px;font-size:14.5px;color:#555;font-weight:normal;">打印</div>
<div class="a" style="left:147px;top:890px;width:1773px;height:19px;background:#eef0f4;"></div>
<div class="a" style="left:1892px;top:637px;width:6px;height:55px;background:#c4c6ca;border-radius:3px"></div>
<div class="a" style="left:409px;top:599px;width:958px;height:274px;background:#fff;box-shadow:0 0 4px rgba(0,0,0,0.35)"></div>
<div class="a" style="left:409px;top:599px;width:958px;height:40px;background:#1eaaf3;"></div>
<div class="a" style="left:431px;top:606.5px;height:23.1px;line-height:23.1px;font-size:16.5px;color:#fff;font-weight:normal;">保存确认</div>
<svg class="a" style="left:1343px;top:612px" width="12" height="12" viewBox="0 0 12 12"><path d="M1 1 L11 11 M11 1 L1 11" stroke="#fff" stroke-width="1.3"/></svg>
<div class="a" style="left:431px;top:660.9px;height:20.3px;line-height:20.3px;font-size:14.5px;color:#555;font-weight:normal;">修改职员【张三1】权限</div>
<div class="a" style="left:431px;top:700.9px;height:20.3px;line-height:20.3px;font-size:14.5px;color:#6cc06f;font-weight:normal;">新增以下权限</div>
<div class="a" style="left:431px;top:728px;width:918px;height:74px;border:1px solid #e3e5ea;border-top:0"></div>
<div class="a" style="left:431px;top:728px;width:918px;height:37px;background:#e8eaee;"></div>
<div class="a" style="left:536px;top:765px;width:1px;height:37px;background:#e3e5ea;"></div>
<div class="a" style="left:640px;top:765px;width:1px;height:37px;background:#e3e5ea;"></div>
<div class="a" style="left:455.5px;top:736.5px;height:18.9px;line-height:18.9px;font-size:13.5px;color:#333;font-weight:bold;">一级菜单</div>
<div class="a" style="left:562px;top:736.5px;height:18.9px;line-height:18.9px;font-size:13.5px;color:#333;font-weight:bold;">二级菜单</div>
<div class="a" style="left:651px;top:736.5px;height:18.9px;line-height:18.9px;font-size:13.5px;color:#333;font-weight:bold;">具体权限</div>
<div class="a" style="left:453px;top:773.4px;height:20.3px;line-height:20.3px;font-size:14.5px;color:#555;font-weight:normal;">在线会计</div>
<div class="a" style="left:557px;top:773.4px;height:20.3px;line-height:20.3px;font-size:14.5px;color:#555;font-weight:normal;">税控发票</div>
<div class="a" style="left:647px;top:773.4px;height:20.3px;line-height:20.3px;font-size:14.5px;color:#555;font-weight:normal;">智能取票</div>
<div class="a" style="left:409px;top:824px;width:958px;height:1px;background:#e5e7eb;"></div>
<div class="a" style="left:1171px;top:833px;width:84px;height:31px;border:1px solid #dcdcdc;border-radius:2px;background:#fff;color:#444;font-size:14.5px;line-height:30px;text-align:center;letter-spacing:3px">取消</div>
<div class="a" style="left:1268px;top:837px;width:78px;height:24px;background:#1fa3f0;color:#fff;font-size:14.5px;line-height:24px;text-align:center;letter-spacing:3px">确定</div>
<div class="a" style="left:1532px;top:8px;width:371px;height:49px;background:#fff;border-radius:3px;box-shadow:0 1px 4px rgba(0,0,0,0.25)"></div>
<div class="a" style="left:1551px;top:23.3px;height:16.8px;line-height:16.8px;font-size:12px;color:#333;font-weight:normal;">税控发票</div>
<div class="a" style="left:1755px;top:22.9px;height:17.5px;line-height:17.5px;font-size:12.5px;color:#777;font-weight:normal;">1/1</div>
<div class="a" style="left:1790px;top:16px;width:1px;height:33px;background:#ddd;"></div>
<svg class="a" style="left:1809px;top:27px" width="13" height="9" viewBox="0 0 13 9"><path d="M1 7.5 L6.5 2 L12 7.5" fill="none" stroke="#444" stroke-width="1.6"/></svg>
<svg class="a" style="left:1840px;top:27px" width="13" height="9" viewBox="0 0 13 9"><path d="M1 1.5 L6.5 7 L12 1.5" fill="none" stroke="#444" stroke-width="1.6"/></svg>
<svg class="a" style="left:1873px;top:26px" width="12" height="12" viewBox="0 0 12 12"><path d="M1 1 L11 11 M11 1 L1 11" stroke="#333" stroke-width="1.7"/></svg>
<svg class="a" style="left:1880px;top:443px" width="40" height="52" viewBox="0 0 40 52"><ellipse cx="7" cy="13" rx="2.6" ry="4.6" transform="rotate(-35 7 13)" fill="#3b9cf5"/><ellipse cx="15" cy="6.5" rx="2.6" ry="5" transform="rotate(-15 15 6.5)" fill="#3b9cf5"/><circle cx="7.5" cy="30" r="6.5" fill="#2f8cf0"/><circle cx="27" cy="12" r="8.5" fill="#2f8cf0"/><ellipse cx="26" cy="29" rx="18" ry="18" fill="#2f8cf0"/><ellipse cx="29" cy="31" rx="10.5" ry="12" fill="#fbe6e2" transform="rotate(-30 29 31)"/><ellipse cx="22.5" cy="35" rx="1.9" ry="2.3" fill="#1d4f7a"/><ellipse cx="32" cy="26" rx="1.9" ry="2.3" fill="#1d4f7a"/><path d="M27 37 Q31 37 33 32.5" stroke="#e8505b" stroke-width="1.8" fill="none"/><ellipse cx="27" cy="47" rx="9" ry="4.5" fill="#2f8cf0"/></svg>
<div class="a" style="left:1631px;top:846.6px;height:28.7px;line-height:28.7px;font-size:20.5px;color:rgba(120,120,120,0.75);font-weight:normal;">激活 Windows</div>
<div class="a" style="left:1631px;top:876.5px;height:18.9px;line-height:18.9px;font-size:13.5px;color:rgba(120,120,120,0.7);font-weight:normal;">转到“设置”以激活 Windows。</div>
<div class="a" style="left:1775px;top:873.3px;height:29.4px;line-height:29.4px;font-size:21px;color:rgba(110,110,110,0.8);font-weight:normal;">@金蝶云社区</div>
<div class="wm" style="left:30.5px;top:19.8px;font-size:19px;line-height:24px;font-weight:bold;color:rgba(28,30,40,0.066)">电话</div>
<div class="wm" style="left:69.5px;top:19.8px;font-size:18px;line-height:24px;font-weight:bold;color:rgba(28,30,40,0.066)">:</div>
<div class="wm" style="left:85.0px;top:19.8px;font-size:21.8px;line-height:24px;font-weight:bold;letter-spacing:0.35px;color:rgba(28,30,40,0.066)">4006-6500-27</div>
<div class="wm" style="left:30.5px;top:47.5px;font-size:19px;line-height:24px;font-weight:bold;color:rgba(28,30,40,0.066)">网址</div>
<div class="wm" style="left:69.5px;top:47.5px;font-size:18px;line-height:24px;font-weight:bold;color:rgba(28,30,40,0.066)">:</div>
<div class="wm" style="left:85.0px;top:47.5px;font-size:17px;line-height:24px;font-weight:bold;letter-spacing:0px;color:rgba(28,30,40,0.066)">www.tdxsoft.com</div>
<div class="wm" style="left:301.3px;top:19.8px;font-size:19px;line-height:24px;font-weight:bold;color:rgba(28,30,40,0.066)">电话</div>
<div class="wm" style="left:340.3px;top:19.8px;font-size:18px;line-height:24px;font-weight:bold;color:rgba(28,30,40,0.066)">:</div>
<div class="wm" style="left:355.8px;top:19.8px;font-size:21.8px;line-height:24px;font-weight:bold;letter-spacing:0.35px;color:rgba(28,30,40,0.066)">4006-6500-27</div>
<div class="wm" style="left:301.3px;top:47.5px;font-size:19px;line-height:24px;font-weight:bold;color:rgba(28,30,40,0.066)">网址</div>
<div class="wm" style="left:340.3px;top:47.5px;font-size:18px;line-height:24px;font-weight:bold;color:rgba(28,30,40,0.066)">:</div>
<div class="wm" style="left:355.8px;top:47.5px;font-size:17px;line-height:24px;font-weight:bold;letter-spacing:0px;color:rgba(28,30,40,0.066)">www.tdxsoft.com</div>
<div class="wm" style="left:572.1px;top:19.8px;font-size:19px;line-height:24px;font-weight:bold;color:rgba(28,30,40,0.066)">电话</div>
<div class="wm" style="left:611.1px;top:19.8px;font-size:18px;line-height:24px;font-weight:bold;color:rgba(28,30,40,0.066)">:</div>
<div class="wm" style="left:626.6px;top:19.8px;font-size:21.8px;line-height:24px;font-weight:bold;letter-spacing:0.35px;color:rgba(28,30,40,0.066)">4006-6500-27</div>
<div class="wm" style="left:572.1px;top:47.5px;font-size:19px;line-height:24px;font-weight:bold;color:rgba(28,30,40,0.066)">网址</div>
<div class="wm" style="left:611.1px;top:47.5px;font-size:18px;line-height:24px;font-weight:bold;color:rgba(28,30,40,0.066)">:</div>
<div class="wm" style="left:626.6px;top:47.5px;font-size:17px;line-height:24px;font-weight:bold;letter-spacing:0px;color:rgba(28,30,40,0.066)">www.tdxsoft.com</div>
<div class="wm" style="left:842.9px;top:19.8px;font-size:19px;line-height:24px;font-weight:bold;color:rgba(28,30,40,0.066)">电话</div>
<div class="wm" style="left:881.9px;top:19.8px;font-size:18px;line-height:24px;font-weight:bold;color:rgba(28,30,40,0.066)">:</div>
<div class="wm" style="left:897.4px;top:19.8px;font-size:21.8px;line-height:24px;font-weight:bold;letter-spacing:0.35px;color:rgba(28,30,40,0.066)">4006-6500-27</div>
<div class="wm" style="left:842.9px;top:47.5px;font-size:19px;line-height:24px;font-weight:bold;color:rgba(28,30,40,0.066)">网址</div>
<div class="wm" style="left:881.9px;top:47.5px;font-size:18px;line-height:24px;font-weight:bold;color:rgba(28,30,40,0.066)">:</div>
<div class="wm" style="left:897.4px;top:47.5px;font-size:17px;line-height:24px;font-weight:bold;letter-spacing:0px;color:rgba(28,30,40,0.066)">www.tdxsoft.com</div>
<div class="wm" style="left:1113.7px;top:19.8px;font-size:19px;line-height:24px;font-weight:bold;color:rgba(28,30,40,0.066)">电话</div>
<div class="wm" style="left:1152.7px;top:19.8px;font-size:18px;line-height:24px;font-weight:bold;color:rgba(28,30,40,0.066)">:</div>
<div class="wm" style="left:1168.2px;top:19.8px;font-size:21.8px;line-height:24px;font-weight:bold;letter-spacing:0.35px;color:rgba(28,30,40,0.066)">4006-6500-27</div>
<div class="wm" style="left:1113.7px;top:47.5px;font-size:19px;line-height:24px;font-weight:bold;color:rgba(28,30,40,0.066)">网址</div>
<div class="wm" style="left:1152.7px;top:47.5px;font-size:18px;line-height:24px;font-weight:bold;color:rgba(28,30,40,0.066)">:</div>
<div class="wm" style="left:1168.2px;top:47.5px;font-size:17px;line-height:24px;font-weight:bold;letter-spacing:0px;color:rgba(28,30,40,0.066)">www.tdxsoft.com</div>
<div class="wm" style="left:1384.5px;top:19.8px;font-size:19px;line-height:24px;font-weight:bold;color:rgba(28,30,40,0.066)">电话</div>
<div class="wm" style="left:1423.5px;top:19.8px;font-size:18px;line-height:24px;font-weight:bold;color:rgba(28,30,40,0.066)">:</div>
<div class="wm" style="left:1439.0px;top:19.8px;font-size:21.8px;line-height:24px;font-weight:bold;letter-spacing:0.35px;color:rgba(28,30,40,0.066)">4006-6500-27</div>
<div class="wm" style="left:1384.5px;top:47.5px;font-size:19px;line-height:24px;font-weight:bold;color:rgba(28,30,40,0.066)">网址</div>
<div class="wm" style="left:1423.5px;top:47.5px;font-size:18px;line-height:24px;font-weight:bold;color:rgba(28,30,40,0.066)">:</div>
<div class="wm" style="left:1439.0px;top:47.5px;font-size:17px;line-height:24px;font-weight:bold;letter-spacing:0px;color:rgba(28,30,40,0.066)">www.tdxsoft.com</div>
<div class="wm" style="left:1655.3px;top:19.8px;font-size:19px;line-height:24px;font-weight:bold;color:rgba(28,30,40,0.066)">电话</div>
<div class="wm" style="left:1694.3px;top:19.8px;font-size:18px;line-height:24px;font-weight:bold;color:rgba(28,30,40,0.066)">:</div>
<div class="wm" style="left:1709.8px;top:19.8px;font-size:21.8px;line-height:24px;font-weight:bold;letter-spacing:0.35px;color:rgba(28,30,40,0.066)">4006-6500-27</div>
<div class="wm" style="left:1655.3px;top:47.5px;font-size:19px;line-height:24px;font-weight:bold;color:rgba(28,30,40,0.066)">网址</div>
<div class="wm" style="left:1694.3px;top:47.5px;font-size:18px;line-height:24px;font-weight:bold;color:rgba(28,30,40,0.066)">:</div>
<div class="wm" style="left:1709.8px;top:47.5px;font-size:17px;line-height:24px;font-weight:bold;letter-spacing:0px;color:rgba(28,30,40,0.066)">www.tdxsoft.com</div>
<div class="wm" style="left:1926.1px;top:19.8px;font-size:19px;line-height:24px;font-weight:bold;color:rgba(28,30,40,0.066)">电话</div>
<div class="wm" style="left:1965.1px;top:19.8px;font-size:18px;line-height:24px;font-weight:bold;color:rgba(28,30,40,0.066)">:</div>
<div class="wm" style="left:1980.6px;top:19.8px;font-size:21.8px;line-height:24px;font-weight:bold;letter-spacing:0.35px;color:rgba(28,30,40,0.066)">4006-6500-27</div>
<div class="wm" style="left:1926.1px;top:47.5px;font-size:19px;line-height:24px;font-weight:bold;color:rgba(28,30,40,0.066)">网址</div>
<div class="wm" style="left:1965.1px;top:47.5px;font-size:18px;line-height:24px;font-weight:bold;color:rgba(28,30,40,0.066)">:</div>
<div class="wm" style="left:1980.6px;top:47.5px;font-size:17px;line-height:24px;font-weight:bold;letter-spacing:0px;color:rgba(28,30,40,0.066)">www.tdxsoft.com</div>
<div class="wm" style="left:30.5px;top:129.8px;font-size:19px;line-height:24px;font-weight:bold;color:rgba(28,30,40,0.066)">电话</div>
<div class="wm" style="left:69.5px;top:129.8px;font-size:18px;line-height:24px;font-weight:bold;color:rgba(28,30,40,0.066)">:</div>
<div class="wm" style="left:85.0px;top:129.8px;font-size:21.8px;line-height:24px;font-weight:bold;letter-spacing:0.35px;color:rgba(28,30,40,0.066)">4006-6500-27</div>
<div class="wm" style="left:30.5px;top:157.5px;font-size:19px;line-height:24px;font-weight:bold;color:rgba(28,30,40,0.066)">网址</div>
<div class="wm" style="left:69.5px;top:157.5px;font-size:18px;line-height:24px;font-weight:bold;color:rgba(28,30,40,0.066)">:</div>
<div class="wm" style="left:85.0px;top:157.5px;font-size:17px;line-height:24px;font-weight:bold;letter-spacing:0px;color:rgba(28,30,40,0.066)">www.tdxsoft.com</div>
<div class="wm" style="left:301.3px;top:129.8px;font-size:19px;line-height:24px;font-weight:bold;color:rgba(28,30,40,0.066)">电话</div>
<div class="wm" style="left:340.3px;top:129.8px;font-size:18px;line-height:24px;font-weight:bold;color:rgba(28,30,40,0.066)">:</div>
<div class="wm" style="left:355.8px;top:129.8px;font-size:21.8px;line-height:24px;font-weight:bold;letter-spacing:0.35px;color:rgba(28,30,40,0.066)">4006-6500-27</div>
<div class="wm" style="left:301.3px;top:157.5px;font-size:19px;line-height:24px;font-weight:bold;color:rgba(28,30,40,0.066)">网址</div>
<div class="wm" style="left:340.3px;top:157.5px;font-size:18px;line-height:24px;font-weight:bold;color:rgba(28,30,40,0.066)">:</div>
<div class="wm" style="left:355.8px;top:157.5px;font-size:17px;line-height:24px;font-weight:bold;letter-spacing:0px;color:rgba(28,30,40,0.066)">www.tdxsoft.com</div>
<div class="wm" style="left:572.1px;top:129.8px;font-size:19px;line-height:24px;font-weight:bold;color:rgba(28,30,40,0.066)">电话</div>
<div class="wm" style="left:611.1px;top:129.8px;font-size:18px;line-height:24px;font-weight:bold;color:rgba(28,30,40,0.066)">:</div>
<div class="wm" style="left:626.6px;top:129.8px;font-size:21.8px;line-height:24px;font-weight:bold;letter-spacing:0.35px;color:rgba(28,30,40,0.066)">4006-6500-27</div>
<div class="wm" style="left:572.1px;top:157.5px;font-size:19px;line-height:24px;font-weight:bold;color:rgba(28,30,40,0.066)">网址</div>
<div class="wm" style="left:611.1px;top:157.5px;font-size:18px;line-height:24px;font-weight:bold;color:rgba(28,30,40,0.066)">:</div>
<div class="wm" style="left:626.6px;top:157.5px;font-size:17px;line-height:24px;font-weight:bold;letter-spacing:0px;color:rgba(28,30,40,0.066)">www.tdxsoft.com</div>
<div class="wm" style="left:842.9px;top:129.8px;font-size:19px;line-height:24px;font-weight:bold;color:rgba(28,30,40,0.066)">电话</div>
<div class="wm" style="left:881.9px;top:129.8px;font-size:18px;line-height:24px;font-weight:bold;color:rgba(28,30,40,0.066)">:</div>
<div class="wm" style="left:897.4px;top:129.8px;font-size:21.8px;line-height:24px;font-weight:bold;letter-spacing:0.35px;color:rgba(28,30,40,0.066)">4006-6500-27</div>
<div class="wm" style="left:842.9px;top:157.5px;font-size:19px;line-height:24px;font-weight:bold;color:rgba(28,30,40,0.066)">网址</div>
<div class="wm" style="left:881.9px;top:157.5px;font-size:18px;line-height:24px;font-weight:bold;color:rgba(28,30,40,0.066)">:</div>
<div class="wm" style="left:897.4px;top:157.5px;font-size:17px;line-height:24px;font-weight:bold;letter-spacing:0px;color:rgba(28,30,40,0.066)">www.tdxsoft.com</div>
<div class="wm" style="left:1113.7px;top:129.8px;font-size:19px;line-height:24px;font-weight:bold;color:rgba(28,30,40,0.066)">电话</div>
<div class="wm" style="left:1152.7px;top:129.8px;font-size:18px;line-height:24px;font-weight:bold;color:rgba(28,30,40,0.066)">:</div>
<div class="wm" style="left:1168.2px;top:129.8px;font-size:21.8px;line-height:24px;font-weight:bold;letter-spacing:0.35px;color:rgba(28,30,40,0.066)">4006-6500-27</div>
<div class="wm" style="left:1113.7px;top:157.5px;font-size:19px;line-height:24px;font-weight:bold;color:rgba(28,30,40,0.066)">网址</div>
<div class="wm" style="left:1152.7px;top:157.5px;font-size:18px;line-height:24px;font-weight:bold;color:rgba(28,30,40,0.066)">:</div>
<div class="wm" style="left:1168.2px;top:157.5px;font-size:17px;line-height:24px;font-weight:bold;letter-spacing:0px;color:rgba(28,30,40,0.066)">www.tdxsoft.com</div>
<div class="wm" style="left:1384.5px;top:129.8px;font-size:19px;line-height:24px;font-weight:bold;color:rgba(28,30,40,0.066)">电话</div>
<div class="wm" style="left:1423.5px;top:129.8px;font-size:18px;line-height:24px;font-weight:bold;color:rgba(28,30,40,0.066)">:</div>
<div class="wm" style="left:1439.0px;top:129.8px;font-size:21.8px;line-height:24px;font-weight:bold;letter-spacing:0.35px;color:rgba(28,30,40,0.066)">4006-6500-27</div>
<div class="wm" style="left:1384.5px;top:157.5px;font-size:19px;line-height:24px;font-weight:bold;color:rgba(28,30,40,0.066)">网址</div>
<div class="wm" style="left:1423.5px;top:157.5px;font-size:18px;line-height:24px;font-weight:bold;color:rgba(28,30,40,0.066)">:</div>
<div class="wm" style="left:1439.0px;top:157.5px;font-size:17px;line-height:24px;font-weight:bold;letter-spacing:0px;color:rgba(28,30,40,0.066)">www.tdxsoft.com</div>
<div class="wm" style="left:1655.3px;top:129.8px;font-size:19px;line-height:24px;font-weight:bold;color:rgba(28,30,40,0.066)">电话</div>
<div class="wm" style="left:1694.3px;top:129.8px;font-size:18px;line-height:24px;font-weight:bold;color:rgba(28,30,40,0.066)">:</div>
<div class="wm" style="left:1709.8px;top:129.8px;font-size:21.8px;line-height:24px;font-weight:bold;letter-spacing:0.35px;color:rgba(28,30,40,0.066)">4006-6500-27</div>
<div class="wm" style="left:1655.3px;top:157.5px;font-size:19px;line-height:24px;font-weight:bold;color:rgba(28,30,40,0.066)">网址</div>
<div class="wm" style="left:1694.3px;top:157.5px;font-size:18px;line-height:24px;font-weight:bold;color:rgba(28,30,40,0.066)">:</div>
<div class="wm" style="left:1709.8px;top:157.5px;font-size:17px;line-height:24px;font-weight:bold;letter-spacing:0px;color:rgba(28,30,40,0.066)">www.tdxsoft.com</div>
<div class="wm" style="left:1926.1px;top:129.8px;font-size:19px;line-height:24px;font-weight:bold;color:rgba(28,30,40,0.066)">电话</div>
<div class="wm" style="left:1965.1px;top:129.8px;font-size:18px;line-height:24px;font-weight:bold;color:rgba(28,30,40,0.066)">:</div>
<div class="wm" style="left:1980.6px;top:129.8px;font-size:21.8px;line-height:24px;font-weight:bold;letter-spacing:0.35px;color:rgba(28,30,40,0.066)">4006-6500-27</div>
<div class="wm" style="left:1926.1px;top:157.5px;font-size:19px;line-height:24px;font-weight:bold;color:rgba(28,30,40,0.066)">网址</div>
<div class="wm" style="left:1965.1px;top:157.5px;font-size:18px;line-height:24px;font-weight:bold;color:rgba(28,30,40,0.066)">:</div>
<div class="wm" style="left:1980.6px;top:157.5px;font-size:17px;line-height:24px;font-weight:bold;letter-spacing:0px;color:rgba(28,30,40,0.066)">www.tdxsoft.com</div>
<div class="wm" style="left:30.5px;top:239.8px;font-size:19px;line-height:24px;font-weight:bold;color:rgba(28,30,40,0.066)">电话</div>
<div class="wm" style="left:69.5px;top:239.8px;font-size:18px;line-height:24px;font-weight:bold;color:rgba(28,30,40,0.066)">:</div>
<div class="wm" style="left:85.0px;top:239.8px;font-size:21.8px;line-height:24px;font-weight:bold;letter-spacing:0.35px;color:rgba(28,30,40,0.066)">4006-6500-27</div>
<div class="wm" style="left:30.5px;top:267.5px;font-size:19px;line-height:24px;font-weight:bold;color:rgba(28,30,40,0.066)">网址</div>
<div class="wm" style="left:69.5px;top:267.5px;font-size:18px;line-height:24px;font-weight:bold;color:rgba(28,30,40,0.066)">:</div>
<div class="wm" style="left:85.0px;top:267.5px;font-size:17px;line-height:24px;font-weight:bold;letter-spacing:0px;color:rgba(28,30,40,0.066)">www.tdxsoft.com</div>
<div class="wm" style="left:301.3px;top:239.8px;font-size:19px;line-height:24px;font-weight:bold;color:rgba(28,30,40,0.066)">电话</div>
<div class="wm" style="left:340.3px;top:239.8px;font-size:18px;line-height:24px;font-weight:bold;color:rgba(28,30,40,0.066)">:</div>
<div class="wm" style="left:355.8px;top:239.8px;font-size:21.8px;line-height:24px;font-weight:bold;letter-spacing:0.35px;color:rgba(28,30,40,0.066)">4006-6500-27</div>
<div class="wm" style="left:301.3px;top:267.5px;font-size:19px;line-height:24px;font-weight:bold;color:rgba(28,30,40,0.066)">网址</div>
<div class="wm" style="left:340.3px;top:267.5px;font-size:18px;line-height:24px;font-weight:bold;color:rgba(28,30,40,0.066)">:</div>
<div class="wm" style="left:355.8px;top:267.5px;font-size:17px;line-height:24px;font-weight:bold;letter-spacing:0px;color:rgba(28,30,40,0.066)">www.tdxsoft.com</div>
<div class="wm" style="left:572.1px;top:239.8px;font-size:19px;line-height:24px;font-weight:bold;color:rgba(28,30,40,0.066)">电话</div>
<div class="wm" style="left:611.1px;top:239.8px;font-size:18px;line-height:24px;font-weight:bold;color:rgba(28,30,40,0.066)">:</div>
<div class="wm" style="left:626.6px;top:239.8px;font-size:21.8px;line-height:24px;font-weight:bold;letter-spacing:0.35px;color:rgba(28,30,40,0.066)">4006-6500-27</div>
<div class="wm" style="left:572.1px;top:267.5px;font-size:19px;line-height:24px;font-weight:bold;color:rgba(28,30,40,0.066)">网址</div>
<div class="wm" style="left:611.1px;top:267.5px;font-size:18px;line-height:24px;font-weight:bold;color:rgba(28,30,40,0.066)">:</div>
<div class="wm" style="left:626.6px;top:267.5px;font-size:17px;line-height:24px;font-weight:bold;letter-spacing:0px;color:rgba(28,30,40,0.066)">www.tdxsoft.com</div>
<div class="wm" style="left:842.9px;top:239.8px;font-size:19px;line-height:24px;font-weight:bold;color:rgba(28,30,40,0.066)">电话</div>
<div class="wm" style="left:881.9px;top:239.8px;font-size:18px;line-height:24px;font-weight:bold;color:rgba(28,30,40,0.066)">:</div>
<div class="wm" style="left:897.4px;top:239.8px;font-size:21.8px;line-height:24px;font-weight:bold;letter-spacing:0.35px;color:rgba(28,30,40,0.066)">4006-6500-27</div>
<div class="wm" style="left:842.9px;top:267.5px;font-size:19px;line-height:24px;font-weight:bold;color:rgba(28,30,40,0.066)">网址</div>
<div class="wm" style="left:881.9px;top:267.5px;font-size:18px;line-height:24px;font-weight:bold;color:rgba(28,30,40,0.066)">:</div>
<div class="wm" style="left:897.4px;top:267.5px;font-size:17px;line-height:24px;font-weight:bold;letter-spacing:0px;color:rgba(28,30,40,0.066)">www.tdxsoft.com</div>
<div class="wm" style="left:1113.7px;top:239.8px;font-size:19px;line-height:24px;font-weight:bold;color:rgba(28,30,40,0.066)">电话</div>
<div class="wm" style="left:1152.7px;top:239.8px;font-size:18px;line-height:24px;font-weight:bold;color:rgba(28,30,40,0.066)">:</div>
<div class="wm" style="left:1168.2px;top:239.8px;font-size:21.8px;line-height:24px;font-weight:bold;letter-spacing:0.35px;color:rgba(28,30,40,0.066)">4006-6500-27</div>
<div class="wm" style="left:1113.7px;top:267.5px;font-size:19px;line-height:24px;font-weight:bold;color:rgba(28,30,40,0.066)">网址</div>
<div class="wm" style="left:1152.7px;top:267.5px;font-size:18px;line-height:24px;font-weight:bold;color:rgba(28,30,40,0.066)">:</div>
<div class="wm" style="left:1168.2px;top:267.5px;font-size:17px;line-height:24px;font-weight:bold;letter-spacing:0px;color:rgba(28,30,40,0.066)">www.tdxsoft.com</div>
<div class="wm" style="left:1384.5px;top:239.8px;font-size:19px;line-height:24px;font-weight:bold;color:rgba(28,30,40,0.066)">电话</div>
<div class="wm" style="left:1423.5px;top:239.8px;font-size:18px;line-height:24px;font-weight:bold;color:rgba(28,30,40,0.066)">:</div>
<div class="wm" style="left:1439.0px;top:239.8px;font-size:21.8px;line-height:24px;font-weight:bold;letter-spacing:0.35px;color:rgba(28,30,40,0.066)">4006-6500-27</div>
<div class="wm" style="left:1384.5px;top:267.5px;font-size:19px;line-height:24px;font-weight:bold;color:rgba(28,30,40,0.066)">网址</div>
<div class="wm" style="left:1423.5px;top:267.5px;font-size:18px;line-height:24px;font-weight:bold;color:rgba(28,30,40,0.066)">:</div>
<div class="wm" style="left:1439.0px;top:267.5px;font-size:17px;line-height:24px;font-weight:bold;letter-spacing:0px;color:rgba(28,30,40,0.066)">www.tdxsoft.com</div>
<div class="wm" style="left:1655.3px;top:239.8px;font-size:19px;line-height:24px;font-weight:bold;color:rgba(28,30,40,0.066)">电话</div>
<div class="wm" style="left:1694.3px;top:239.8px;font-size:18px;line-height:24px;font-weight:bold;color:rgba(28,30,40,0.066)">:</div>
<div class="wm" style="left:1709.8px;top:239.8px;font-size:21.8px;line-height:24px;font-weight:bold;letter-spacing:0.35px;color:rgba(28,30,40,0.066)">4006-6500-27</div>
<div class="wm" style="left:1655.3px;top:267.5px;font-size:19px;line-height:24px;font-weight:bold;color:rgba(28,30,40,0.066)">网址</div>
<div class="wm" style="left:1694.3px;top:267.5px;font-size:18px;line-height:24px;font-weight:bold;color:rgba(28,30,40,0.066)">:</div>
<div class="wm" style="left:1709.8px;top:267.5px;font-size:17px;line-height:24px;font-weight:bold;letter-spacing:0px;color:rgba(28,30,40,0.066)">www.tdxsoft.com</div>
<div class="wm" style="left:1926.1px;top:239.8px;font-size:19px;line-height:24px;font-weight:bold;color:rgba(28,30,40,0.066)">电话</div>
<div class="wm" style="left:1965.1px;top:239.8px;font-size:18px;line-height:24px;font-weight:bold;color:rgba(28,30,40,0.066)">:</div>
<div class="wm" style="left:1980.6px;top:239.8px;font-size:21.8px;line-height:24px;font-weight:bold;letter-spacing:0.35px;color:rgba(28,30,40,0.066)">4006-6500-27</div>
<div class="wm" style="left:1926.1px;top:267.5px;font-size:19px;line-height:24px;font-weight:bold;color:rgba(28,30,40,0.066)">网址</div>
<div class="wm" style="left:1965.1px;top:267.5px;font-size:18px;line-height:24px;font-weight:bold;color:rgba(28,30,40,0.066)">:</div>
<div class="wm" style="left:1980.6px;top:267.5px;font-size:17px;line-height:24px;font-weight:bold;letter-spacing:0px;color:rgba(28,30,40,0.066)">www.tdxsoft.com</div>
<div class="wm" style="left:30.5px;top:349.8px;font-size:19px;line-height:24px;font-weight:bold;color:rgba(28,30,40,0.066)">电话</div>
<div class="wm" style="left:69.5px;top:349.8px;font-size:18px;line-height:24px;font-weight:bold;color:rgba(28,30,40,0.066)">:</div>
<div class="wm" style="left:85.0px;top:349.8px;font-size:21.8px;line-height:24px;font-weight:bold;letter-spacing:0.35px;color:rgba(28,30,40,0.066)">4006-6500-27</div>
<div class="wm" style="left:30.5px;top:377.5px;font-size:19px;line-height:24px;font-weight:bold;color:rgba(28,30,40,0.066)">网址</div>
<div class="wm" style="left:69.5px;top:377.5px;font-size:18px;line-height:24px;font-weight:bold;color:rgba(28,30,40,0.066)">:</div>
<div class="wm" style="left:85.0px;top:377.5px;font-size:17px;line-height:24px;font-weight:bold;letter-spacing:0px;color:rgba(28,30,40,0.066)">www.tdxsoft.com</div>
<div class="wm" style="left:301.3px;top:349.8px;font-size:19px;line-height:24px;font-weight:bold;color:rgba(28,30,40,0.066)">电话</div>
<div class="wm" style="left:340.3px;top:349.8px;font-size:18px;line-height:24px;font-weight:bold;color:rgba(28,30,40,0.066)">:</div>
<div class="wm" style="left:355.8px;top:349.8px;font-size:21.8px;line-height:24px;font-weight:bold;letter-spacing:0.35px;color:rgba(28,30,40,0.066)">4006-6500-27</div>
<div class="wm" style="left:301.3px;top:377.5px;font-size:19px;line-height:24px;font-weight:bold;color:rgba(28,30,40,0.066)">网址</div>
<div class="wm" style="left:340.3px;top:377.5px;font-size:18px;line-height:24px;font-weight:bold;color:rgba(28,30,40,0.066)">:</div>
<div class="wm" style="left:355.8px;top:377.5px;font-size:17px;line-height:24px;font-weight:bold;letter-spacing:0px;color:rgba(28,30,40,0.066)">www.tdxsoft.com</div>
<div class="wm" style="left:572.1px;top:349.8px;font-size:19px;line-height:24px;font-weight:bold;color:rgba(28,30,40,0.066)">电话</div>
<div class="wm" style="left:611.1px;top:349.8px;font-size:18px;line-height:24px;font-weight:bold;color:rgba(28,30,40,0.066)">:</div>
<div class="wm" style="left:626.6px;top:349.8px;font-size:21.8px;line-height:24px;font-weight:bold;letter-spacing:0.35px;color:rgba(28,30,40,0.066)">4006-6500-27</div>
<div class="wm" style="left:572.1px;top:377.5px;font-size:19px;line-height:24px;font-weight:bold;color:rgba(28,30,40,0.066)">网址</div>
<div class="wm" style="left:611.1px;top:377.5px;font-size:18px;line-height:24px;font-weight:bold;color:rgba(28,30,40,0.066)">:</div>
<div class="wm" style="left:626.6px;top:377.5px;font-size:17px;line-height:24px;font-weight:bold;letter-spacing:0px;color:rgba(28,30,40,0.066)">www.tdxsoft.com</div>
<div class="wm" style="left:842.9px;top:349.8px;font-size:19px;line-height:24px;font-weight:bold;color:rgba(28,30,40,0.066)">电话</div>
<div class="wm" style="left:881.9px;top:349.8px;font-size:18px;line-height:24px;font-weight:bold;color:rgba(28,30,40,0.066)">:</div>
<div class="wm" style="left:897.4px;top:349.8px;font-size:21.8px;line-height:24px;font-weight:bold;letter-spacing:0.35px;color:rgba(28,30,40,0.066)">4006-6500-27</div>
<div class="wm" style="left:842.9px;top:377.5px;font-size:19px;line-height:24px;font-weight:bold;color:rgba(28,30,40,0.066)">网址</div>
<div class="wm" style="left:881.9px;top:377.5px;font-size:18px;line-height:24px;font-weight:bold;color:rgba(28,30,40,0.066)">:</div>
<div class="wm" style="left:897.4px;top:377.5px;font-size:17px;line-height:24px;font-weight:bold;letter-spacing:0px;color:rgba(28,30,40,0.066)">www.tdxsoft.com</div>
<div class="wm" style="left:1113.7px;top:349.8px;font-size:19px;line-height:24px;font-weight:bold;color:rgba(28,30,40,0.066)">电话</div>
<div class="wm" style="left:1152.7px;top:349.8px;font-size:18px;line-height:24px;font-weight:bold;color:rgba(28,30,40,0.066)">:</div>
<div class="wm" style="left:1168.2px;top:349.8px;font-size:21.8px;line-height:24px;font-weight:bold;letter-spacing:0.35px;color:rgba(28,30,40,0.066)">4006-6500-27</div>
<div class="wm" style="left:1113.7px;top:377.5px;font-size:19px;line-height:24px;font-weight:bold;color:rgba(28,30,40,0.066)">网址</div>
<div class="wm" style="left:1152.7px;top:377.5px;font-size:18px;line-height:24px;font-weight:bold;color:rgba(28,30,40,0.066)">:</div>
<div class="wm" style="left:1168.2px;top:377.5px;font-size:17px;line-height:24px;font-weight:bold;letter-spacing:0px;color:rgba(28,30,40,0.066)">www.tdxsoft.com</div>
<div class="wm" style="left:1384.5px;top:349.8px;font-size:19px;line-height:24px;font-weight:bold;color:rgba(28,30,40,0.066)">电话</div>
<div class="wm" style="left:1423.5px;top:349.8px;font-size:18px;line-height:24px;font-weight:bold;color:rgba(28,30,40,0.066)">:</div>
<div class="wm" style="left:1439.0px;top:349.8px;font-size:21.8px;line-height:24px;font-weight:bold;letter-spacing:0.35px;color:rgba(28,30,40,0.066)">4006-6500-27</div>
<div class="wm" style="left:1384.5px;top:377.5px;font-size:19px;line-height:24px;font-weight:bold;color:rgba(28,30,40,0.066)">网址</div>
<div class="wm" style="left:1423.5px;top:377.5px;font-size:18px;line-height:24px;font-weight:bold;color:rgba(28,30,40,0.066)">:</div>
<div class="wm" style="left:1439.0px;top:377.5px;font-size:17px;line-height:24px;font-weight:bold;letter-spacing:0px;color:rgba(28,30,40,0.066)">www.tdxsoft.com</div>
<div class="wm" style="left:1655.3px;top:349.8px;font-size:19px;line-height:24px;font-weight:bold;color:rgba(28,30,40,0.066)">电话</div>
<div class="wm" style="left:1694.3px;top:349.8px;font-size:18px;line-height:24px;font-weight:bold;color:rgba(28,30,40,0.066)">:</div>
<div class="wm" style="left:1709.8px;top:349.8px;font-size:21.8px;line-height:24px;font-weight:bold;letter-spacing:0.35px;color:rgba(28,30,40,0.066)">4006-6500-27</div>
<div class="wm" style="left:1655.3px;top:377.5px;font-size:19px;line-height:24px;font-weight:bold;color:rgba(28,30,40,0.066)">网址</div>
<div class="wm" style="left:1694.3px;top:377.5px;font-size:18px;line-height:24px;font-weight:bold;color:rgba(28,30,40,0.066)">:</div>
<div class="wm" style="left:1709.8px;top:377.5px;font-size:17px;line-height:24px;font-weight:bold;letter-spacing:0px;color:rgba(28,30,40,0.066)">www.tdxsoft.com</div>
<div class="wm" style="left:1926.1px;top:349.8px;font-size:19px;line-height:24px;font-weight:bold;color:rgba(28,30,40,0.066)">电话</div>
<div class="wm" style="left:1965.1px;top:349.8px;font-size:18px;line-height:24px;font-weight:bold;color:rgba(28,30,40,0.066)">:</div>
<div class="wm" style="left:1980.6px;top:349.8px;font-size:21.8px;line-height:24px;font-weight:bold;letter-spacing:0.35px;color:rgba(28,30,40,0.066)">4006-6500-27</div>
<div class="wm" style="left:1926.1px;top:377.5px;font-size:19px;line-height:24px;font-weight:bold;color:rgba(28,30,40,0.066)">网址</div>
<div class="wm" style="left:1965.1px;top:377.5px;font-size:18px;line-height:24px;font-weight:bold;color:rgba(28,30,40,0.066)">:</div>
<div class="wm" style="left:1980.6px;top:377.5px;font-size:17px;line-height:24px;font-weight:bold;letter-spacing:0px;color:rgba(28,30,40,0.066)">www.tdxsoft.com</div>
<div class="wm" style="left:30.5px;top:459.8px;font-size:19px;line-height:24px;font-weight:bold;color:rgba(28,30,40,0.066)">电话</div>
<div class="wm" style="left:69.5px;top:459.8px;font-size:18px;line-height:24px;font-weight:bold;color:rgba(28,30,40,0.066)">:</div>
<div class="wm" style="left:85.0px;top:459.8px;font-size:21.8px;line-height:24px;font-weight:bold;letter-spacing:0.35px;color:rgba(28,30,40,0.066)">4006-6500-27</div>
<div class="wm" style="left:30.5px;top:487.5px;font-size:19px;line-height:24px;font-weight:bold;color:rgba(28,30,40,0.066)">网址</div>
<div class="wm" style="left:69.5px;top:487.5px;font-size:18px;line-height:24px;font-weight:bold;color:rgba(28,30,40,0.066)">:</div>
<div class="wm" style="left:85.0px;top:487.5px;font-size:17px;line-height:24px;font-weight:bold;letter-spacing:0px;color:rgba(28,30,40,0.066)">www.tdxsoft.com</div>
<div class="wm" style="left:301.3px;top:459.8px;font-size:19px;line-height:24px;font-weight:bold;color:rgba(28,30,40,0.066)">电话</div>
<div class="wm" style="left:340.3px;top:459.8px;font-size:18px;line-height:24px;font-weight:bold;color:rgba(28,30,40,0.066)">:</div>
<div class="wm" style="left:355.8px;top:459.8px;font-size:21.8px;line-height:24px;font-weight:bold;letter-spacing:0.35px;color:rgba(28,30,40,0.066)">4006-6500-27</div>
<div class="wm" style="left:301.3px;top:487.5px;font-size:19px;line-height:24px;font-weight:bold;color:rgba(28,30,40,0.066)">网址</div>
<div class="wm" style="left:340.3px;top:487.5px;font-size:18px;line-height:24px;font-weight:bold;color:rgba(28,30,40,0.066)">:</div>
<div class="wm" style="left:355.8px;top:487.5px;font-size:17px;line-height:24px;font-weight:bold;letter-spacing:0px;color:rgba(28,30,40,0.066)">www.tdxsoft.com</div>
<div class="wm" style="left:572.1px;top:459.8px;font-size:19px;line-height:24px;font-weight:bold;color:rgba(28,30,40,0.066)">电话</div>
<div class="wm" style="left:611.1px;top:459.8px;font-size:18px;line-height:24px;font-weight:bold;color:rgba(28,30,40,0.066)">:</div>
<div class="wm" style="left:626.6px;top:459.8px;font-size:21.8px;line-height:24px;font-weight:bold;letter-spacing:0.35px;color:rgba(28,30,40,0.066)">4006-6500-27</div>
<div class="wm" style="left:572.1px;top:487.5px;font-size:19px;line-height:24px;font-weight:bold;color:rgba(28,30,40,0.066)">网址</div>
<div class="wm" style="left:611.1px;top:487.5px;font-size:18px;line-height:24px;font-weight:bold;color:rgba(28,30,40,0.066)">:</div>
<div class="wm" style="left:626.6px;top:487.5px;font-size:17px;line-height:24px;font-weight:bold;letter-spacing:0px;color:rgba(28,30,40,0.066)">www.tdxsoft.com</div>
<div class="wm" style="left:842.9px;top:459.8px;font-size:19px;line-height:24px;font-weight:bold;color:rgba(28,30,40,0.066)">电话</div>
<div class="wm" style="left:881.9px;top:459.8px;font-size:18px;line-height:24px;font-weight:bold;color:rgba(28,30,40,0.066)">:</div>
<div class="wm" style="left:897.4px;top:459.8px;font-size:21.8px;line-height:24px;font-weight:bold;letter-spacing:0.35px;color:rgba(28,30,40,0.066)">4006-6500-27</div>
<div class="wm" style="left:842.9px;top:487.5px;font-size:19px;line-height:24px;font-weight:bold;color:rgba(28,30,40,0.066)">网址</div>
<div class="wm" style="left:881.9px;top:487.5px;font-size:18px;line-height:24px;font-weight:bold;color:rgba(28,30,40,0.066)">:</div>
<div class="wm" style="left:897.4px;top:487.5px;font-size:17px;line-height:24px;font-weight:bold;letter-spacing:0px;color:rgba(28,30,40,0.066)">www.tdxsoft.com</div>
<div class="wm" style="left:1113.7px;top:459.8px;font-size:19px;line-height:24px;font-weight:bold;color:rgba(28,30,40,0.066)">电话</div>
<div class="wm" style="left:1152.7px;top:459.8px;font-size:18px;line-height:24px;font-weight:bold;color:rgba(28,30,40,0.066)">:</div>
<div class="wm" style="left:1168.2px;top:459.8px;font-size:21.8px;line-height:24px;font-weight:bold;letter-spacing:0.35px;color:rgba(28,30,40,0.066)">4006-6500-27</div>
<div class="wm" style="left:1113.7px;top:487.5px;font-size:19px;line-height:24px;font-weight:bold;color:rgba(28,30,40,0.066)">网址</div>
<div class="wm" style="left:1152.7px;top:487.5px;font-size:18px;line-height:24px;font-weight:bold;color:rgba(28,30,40,0.066)">:</div>
<div class="wm" style="left:1168.2px;top:487.5px;font-size:17px;line-height:24px;font-weight:bold;letter-spacing:0px;color:rgba(28,30,40,0.066)">www.tdxsoft.com</div>
<div class="wm" style="left:1384.5px;top:459.8px;font-size:19px;line-height:24px;font-weight:bold;color:rgba(28,30,40,0.066)">电话</div>
<div class="wm" style="left:1423.5px;top:459.8px;font-size:18px;line-height:24px;font-weight:bold;color:rgba(28,30,40,0.066)">:</div>
<div class="wm" style="left:1439.0px;top:459.8px;font-size:21.8px;line-height:24px;font-weight:bold;letter-spacing:0.35px;color:rgba(28,30,40,0.066)">4006-6500-27</div>
<div class="wm" style="left:1384.5px;top:487.5px;font-size:19px;line-height:24px;font-weight:bold;color:rgba(28,30,40,0.066)">网址</div>
<div class="wm" style="left:1423.5px;top:487.5px;font-size:18px;line-height:24px;font-weight:bold;color:rgba(28,30,40,0.066)">:</div>
<div class="wm" style="left:1439.0px;top:487.5px;font-size:17px;line-height:24px;font-weight:bold;letter-spacing:0px;color:rgba(28,30,40,0.066)">www.tdxsoft.com</div>
<div class="wm" style="left:1655.3px;top:459.8px;font-size:19px;line-height:24px;font-weight:bold;color:rgba(28,30,40,0.066)">电话</div>
<div class="wm" style="left:1694.3px;top:459.8px;font-size:18px;line-height:24px;font-weight:bold;color:rgba(28,30,40,0.066)">:</div>
<div class="wm" style="left:1709.8px;top:459.8px;font-size:21.8px;line-height:24px;font-weight:bold;letter-spacing:0.35px;color:rgba(28,30,40,0.066)">4006-6500-27</div>
<div class="wm" style="left:1655.3px;top:487.5px;font-size:19px;line-height:24px;font-weight:bold;color:rgba(28,30,40,0.066)">网址</div>
<div class="wm" style="left:1694.3px;top:487.5px;font-size:18px;line-height:24px;font-weight:bold;color:rgba(28,30,40,0.066)">:</div>
<div class="wm" style="left:1709.8px;top:487.5px;font-size:17px;line-height:24px;font-weight:bold;letter-spacing:0px;color:rgba(28,30,40,0.066)">www.tdxsoft.com</div>
<div class="wm" style="left:1926.1px;top:459.8px;font-size:19px;line-height:24px;font-weight:bold;color:rgba(28,30,40,0.066)">电话</div>
<div class="wm" style="left:1965.1px;top:459.8px;font-size:18px;line-height:24px;font-weight:bold;color:rgba(28,30,40,0.066)">:</div>
<div class="wm" style="left:1980.6px;top:459.8px;font-size:21.8px;line-height:24px;font-weight:bold;letter-spacing:0.35px;color:rgba(28,30,40,0.066)">4006-6500-27</div>
<div class="wm" style="left:1926.1px;top:487.5px;font-size:19px;line-height:24px;font-weight:bold;color:rgba(28,30,40,0.066)">网址</div>
<div class="wm" style="left:1965.1px;top:487.5px;font-size:18px;line-height:24px;font-weight:bold;color:rgba(28,30,40,0.066)">:</div>
<div class="wm" style="left:1980.6px;top:487.5px;font-size:17px;line-height:24px;font-weight:bold;letter-spacing:0px;color:rgba(28,30,40,0.066)">www.tdxsoft.com</div>
<div class="wm" style="left:30.5px;top:569.8px;font-size:19px;line-height:24px;font-weight:bold;color:rgba(28,30,40,0.066)">电话</div>
<div class="wm" style="left:69.5px;top:569.8px;font-size:18px;line-height:24px;font-weight:bold;color:rgba(28,30,40,0.066)">:</div>
<div class="wm" style="left:85.0px;top:569.8px;font-size:21.8px;line-height:24px;font-weight:bold;letter-spacing:0.35px;color:rgba(28,30,40,0.066)">4006-6500-27</div>
<div class="wm" style="left:30.5px;top:597.5px;font-size:19px;line-height:24px;font-weight:bold;color:rgba(28,30,40,0.066)">网址</div>
<div class="wm" style="left:69.5px;top:597.5px;font-size:18px;line-height:24px;font-weight:bold;color:rgba(28,30,40,0.066)">:</div>
<div class="wm" style="left:85.0px;top:597.5px;font-size:17px;line-height:24px;font-weight:bold;letter-spacing:0px;color:rgba(28,30,40,0.066)">www.tdxsoft.com</div>
<div class="wm" style="left:301.3px;top:569.8px;font-size:19px;line-height:24px;font-weight:bold;color:rgba(28,30,40,0.066)">电话</div>
<div class="wm" style="left:340.3px;top:569.8px;font-size:18px;line-height:24px;font-weight:bold;color:rgba(28,30,40,0.066)">:</div>
<div class="wm" style="left:355.8px;top:569.8px;font-size:21.8px;line-height:24px;font-weight:bold;letter-spacing:0.35px;color:rgba(28,30,40,0.066)">4006-6500-27</div>
<div class="wm" style="left:301.3px;top:597.5px;font-size:19px;line-height:24px;font-weight:bold;color:rgba(28,30,40,0.066)">网址</div>
<div class="wm" style="left:340.3px;top:597.5px;font-size:18px;line-height:24px;font-weight:bold;color:rgba(28,30,40,0.066)">:</div>
<div class="wm" style="left:355.8px;top:597.5px;font-size:17px;line-height:24px;font-weight:bold;letter-spacing:0px;color:rgba(28,30,40,0.066)">www.tdxsoft.com</div>
<div class="wm" style="left:572.1px;top:569.8px;font-size:19px;line-height:24px;font-weight:bold;color:rgba(28,30,40,0.066)">电话</div>
<div class="wm" style="left:611.1px;top:569.8px;font-size:18px;line-height:24px;font-weight:bold;color:rgba(28,30,40,0.066)">:</div>
<div class="wm" style="left:626.6px;top:569.8px;font-size:21.8px;line-height:24px;font-weight:bold;letter-spacing:0.35px;color:rgba(28,30,40,0.066)">4006-6500-27</div>
<div class="wm" style="left:572.1px;top:597.5px;font-size:19px;line-height:24px;font-weight:bold;color:rgba(28,30,40,0.066)">网址</div>
<div class="wm" style="left:611.1px;top:597.5px;font-size:18px;line-height:24px;font-weight:bold;color:rgba(28,30,40,0.066)">:</div>
<div class="wm" style="left:626.6px;top:597.5px;font-size:17px;line-height:24px;font-weight:bold;letter-spacing:0px;color:rgba(28,30,40,0.066)">www.tdxsoft.com</div>
<div class="wm" style="left:842.9px;top:569.8px;font-size:19px;line-height:24px;font-weight:bold;color:rgba(28,30,40,0.066)">电话</div>
<div class="wm" style="left:881.9px;top:569.8px;font-size:18px;line-height:24px;font-weight:bold;color:rgba(28,30,40,0.066)">:</div>
<div class="wm" style="left:897.4px;top:569.8px;font-size:21.8px;line-height:24px;font-weight:bold;letter-spacing:0.35px;color:rgba(28,30,40,0.066)">4006-6500-27</div>
<div class="wm" style="left:842.9px;top:597.5px;font-size:19px;line-height:24px;font-weight:bold;color:rgba(28,30,40,0.066)">网址</div>
<div class="wm" style="left:881.9px;top:597.5px;font-size:18px;line-height:24px;font-weight:bold;color:rgba(28,30,40,0.066)">:</div>
<div class="wm" style="left:897.4px;top:597.5px;font-size:17px;line-height:24px;font-weight:bold;letter-spacing:0px;color:rgba(28,30,40,0.066)">www.tdxsoft.com</div>
<div class="wm" style="left:1113.7px;top:569.8px;font-size:19px;line-height:24px;font-weight:bold;color:rgba(28,30,40,0.066)">电话</div>
<div class="wm" style="left:1152.7px;top:569.8px;font-size:18px;line-height:24px;font-weight:bold;color:rgba(28,30,40,0.066)">:</div>
<div class="wm" style="left:1168.2px;top:569.8px;font-size:21.8px;line-height:24px;font-weight:bold;letter-spacing:0.35px;color:rgba(28,30,40,0.066)">4006-6500-27</div>
<div class="wm" style="left:1113.7px;top:597.5px;font-size:19px;line-height:24px;font-weight:bold;color:rgba(28,30,40,0.066)">网址</div>
<div class="wm" style="left:1152.7px;top:597.5px;font-size:18px;line-height:24px;font-weight:bold;color:rgba(28,30,40,0.066)">:</div>
<div class="wm" style="left:1168.2px;top:597.5px;font-size:17px;line-height:24px;font-weight:bold;letter-spacing:0px;color:rgba(28,30,40,0.066)">www.tdxsoft.com</div>
<div class="wm" style="left:1384.5px;top:569.8px;font-size:19px;line-height:24px;font-weight:bold;color:rgba(28,30,40,0.066)">电话</div>
<div class="wm" style="left:1423.5px;top:569.8px;font-size:18px;line-height:24px;font-weight:bold;color:rgba(28,30,40,0.066)">:</div>
<div class="wm" style="left:1439.0px;top:569.8px;font-size:21.8px;line-height:24px;font-weight:bold;letter-spacing:0.35px;color:rgba(28,30,40,0.066)">4006-6500-27</div>
<div class="wm" style="left:1384.5px;top:597.5px;font-size:19px;line-height:24px;font-weight:bold;color:rgba(28,30,40,0.066)">网址</div>
<div class="wm" style="left:1423.5px;top:597.5px;font-size:18px;line-height:24px;font-weight:bold;color:rgba(28,30,40,0.066)">:</div>
<div class="wm" style="left:1439.0px;top:597.5px;font-size:17px;line-height:24px;font-weight:bold;letter-spacing:0px;color:rgba(28,30,40,0.066)">www.tdxsoft.com</div>
<div class="wm" style="left:1655.3px;top:569.8px;font-size:19px;line-height:24px;font-weight:bold;color:rgba(28,30,40,0.066)">电话</div>
<div class="wm" style="left:1694.3px;top:569.8px;font-size:18px;line-height:24px;font-weight:bold;color:rgba(28,30,40,0.066)">:</div>
<div class="wm" style="left:1709.8px;top:569.8px;font-size:21.8px;line-height:24px;font-weight:bold;letter-spacing:0.35px;color:rgba(28,30,40,0.066)">4006-6500-27</div>
<div class="wm" style="left:1655.3px;top:597.5px;font-size:19px;line-height:24px;font-weight:bold;color:rgba(28,30,40,0.066)">网址</div>
<div class="wm" style="left:1694.3px;top:597.5px;font-size:18px;line-height:24px;font-weight:bold;color:rgba(28,30,40,0.066)">:</div>
<div class="wm" style="left:1709.8px;top:597.5px;font-size:17px;line-height:24px;font-weight:bold;letter-spacing:0px;color:rgba(28,30,40,0.066)">www.tdxsoft.com</div>
<div class="wm" style="left:1926.1px;top:569.8px;font-size:19px;line-height:24px;font-weight:bold;color:rgba(28,30,40,0.066)">电话</div>
<div class="wm" style="left:1965.1px;top:569.8px;font-size:18px;line-height:24px;font-weight:bold;color:rgba(28,30,40,0.066)">:</div>
<div class="wm" style="left:1980.6px;top:569.8px;font-size:21.8px;line-height:24px;font-weight:bold;letter-spacing:0.35px;color:rgba(28,30,40,0.066)">4006-6500-27</div>
<div class="wm" style="left:1926.1px;top:597.5px;font-size:19px;line-height:24px;font-weight:bold;color:rgba(28,30,40,0.066)">网址</div>
<div class="wm" style="left:1965.1px;top:597.5px;font-size:18px;line-height:24px;font-weight:bold;color:rgba(28,30,40,0.066)">:</div>
<div class="wm" style="left:1980.6px;top:597.5px;font-size:17px;line-height:24px;font-weight:bold;letter-spacing:0px;color:rgba(28,30,40,0.066)">www.tdxsoft.com</div>
<div class="wm" style="left:30.5px;top:679.8px;font-size:19px;line-height:24px;font-weight:bold;color:rgba(28,30,40,0.066)">电话</div>
<div class="wm" style="left:69.5px;top:679.8px;font-size:18px;line-height:24px;font-weight:bold;color:rgba(28,30,40,0.066)">:</div>
<div class="wm" style="left:85.0px;top:679.8px;font-size:21.8px;line-height:24px;font-weight:bold;letter-spacing:0.35px;color:rgba(28,30,40,0.066)">4006-6500-27</div>
<div class="wm" style="left:30.5px;top:707.5px;font-size:19px;line-height:24px;font-weight:bold;color:rgba(28,30,40,0.066)">网址</div>
<div class="wm" style="left:69.5px;top:707.5px;font-size:18px;line-height:24px;font-weight:bold;color:rgba(28,30,40,0.066)">:</div>
<div class="wm" style="left:85.0px;top:707.5px;font-size:17px;line-height:24px;font-weight:bold;letter-spacing:0px;color:rgba(28,30,40,0.066)">www.tdxsoft.com</div>
<div class="wm" style="left:301.3px;top:679.8px;font-size:19px;line-height:24px;font-weight:bold;color:rgba(28,30,40,0.066)">电话</div>
<div class="wm" style="left:340.3px;top:679.8px;font-size:18px;line-height:24px;font-weight:bold;color:rgba(28,30,40,0.066)">:</div>
<div class="wm" style="left:355.8px;top:679.8px;font-size:21.8px;line-height:24px;font-weight:bold;letter-spacing:0.35px;color:rgba(28,30,40,0.066)">4006-6500-27</div>
<div class="wm" style="left:301.3px;top:707.5px;font-size:19px;line-height:24px;font-weight:bold;color:rgba(28,30,40,0.066)">网址</div>
<div class="wm" style="left:340.3px;top:707.5px;font-size:18px;line-height:24px;font-weight:bold;color:rgba(28,30,40,0.066)">:</div>
<div class="wm" style="left:355.8px;top:707.5px;font-size:17px;line-height:24px;font-weight:bold;letter-spacing:0px;color:rgba(28,30,40,0.066)">www.tdxsoft.com</div>
<div class="wm" style="left:572.1px;top:679.8px;font-size:19px;line-height:24px;font-weight:bold;color:rgba(28,30,40,0.066)">电话</div>
<div class="wm" style="left:611.1px;top:679.8px;font-size:18px;line-height:24px;font-weight:bold;color:rgba(28,30,40,0.066)">:</div>
<div class="wm" style="left:626.6px;top:679.8px;font-size:21.8px;line-height:24px;font-weight:bold;letter-spacing:0.35px;color:rgba(28,30,40,0.066)">4006-6500-27</div>
<div class="wm" style="left:572.1px;top:707.5px;font-size:19px;line-height:24px;font-weight:bold;color:rgba(28,30,40,0.066)">网址</div>
<div class="wm" style="left:611.1px;top:707.5px;font-size:18px;line-height:24px;font-weight:bold;color:rgba(28,30,40,0.066)">:</div>
<div class="wm" style="left:626.6px;top:707.5px;font-size:17px;line-height:24px;font-weight:bold;letter-spacing:0px;color:rgba(28,30,40,0.066)">www.tdxsoft.com</div>
<div class="wm" style="left:842.9px;top:679.8px;font-size:19px;line-height:24px;font-weight:bold;color:rgba(28,30,40,0.066)">电话</div>
<div class="wm" style="left:881.9px;top:679.8px;font-size:18px;line-height:24px;font-weight:bold;color:rgba(28,30,40,0.066)">:</div>
<div class="wm" style="left:897.4px;top:679.8px;font-size:21.8px;line-height:24px;font-weight:bold;letter-spacing:0.35px;color:rgba(28,30,40,0.066)">4006-6500-27</div>
<div class="wm" style="left:842.9px;top:707.5px;font-size:19px;line-height:24px;font-weight:bold;color:rgba(28,30,40,0.066)">网址</div>
<div class="wm" style="left:881.9px;top:707.5px;font-size:18px;line-height:24px;font-weight:bold;color:rgba(28,30,40,0.066)">:</div>
<div class="wm" style="left:897.4px;top:707.5px;font-size:17px;line-height:24px;font-weight:bold;letter-spacing:0px;color:rgba(28,30,40,0.066)">www.tdxsoft.com</div>
<div class="wm" style="left:1113.7px;top:679.8px;font-size:19px;line-height:24px;font-weight:bold;color:rgba(28,30,40,0.066)">电话</div>
<div class="wm" style="left:1152.7px;top:679.8px;font-size:18px;line-height:24px;font-weight:bold;color:rgba(28,30,40,0.066)">:</div>
<div class="wm" style="left:1168.2px;top:679.8px;font-size:21.8px;line-height:24px;font-weight:bold;letter-spacing:0.35px;color:rgba(28,30,40,0.066)">4006-6500-27</div>
<div class="wm" style="left:1113.7px;top:707.5px;font-size:19px;line-height:24px;font-weight:bold;color:rgba(28,30,40,0.066)">网址</div>
<div class="wm" style="left:1152.7px;top:707.5px;font-size:18px;line-height:24px;font-weight:bold;color:rgba(28,30,40,0.066)">:</div>
<div class="wm" style="left:1168.2px;top:707.5px;font-size:17px;line-height:24px;font-weight:bold;letter-spacing:0px;color:rgba(28,30,40,0.066)">www.tdxsoft.com</div>
<div class="wm" style="left:1384.5px;top:679.8px;font-size:19px;line-height:24px;font-weight:bold;color:rgba(28,30,40,0.066)">电话</div>
<div class="wm" style="left:1423.5px;top:679.8px;font-size:18px;line-height:24px;font-weight:bold;color:rgba(28,30,40,0.066)">:</div>
<div class="wm" style="left:1439.0px;top:679.8px;font-size:21.8px;line-height:24px;font-weight:bold;letter-spacing:0.35px;color:rgba(28,30,40,0.066)">4006-6500-27</div>
<div class="wm" style="left:1384.5px;top:707.5px;font-size:19px;line-height:24px;font-weight:bold;color:rgba(28,30,40,0.066)">网址</div>
<div class="wm" style="left:1423.5px;top:707.5px;font-size:18px;line-height:24px;font-weight:bold;color:rgba(28,30,40,0.066)">:</div>
<div class="wm" style="left:1439.0px;top:707.5px;font-size:17px;line-height:24px;font-weight:bold;letter-spacing:0px;color:rgba(28,30,40,0.066)">www.tdxsoft.com</div>
<div class="wm" style="left:1655.3px;top:679.8px;font-size:19px;line-height:24px;font-weight:bold;color:rgba(28,30,40,0.066)">电话</div>
<div class="wm" style="left:1694.3px;top:679.8px;font-size:18px;line-height:24px;font-weight:bold;color:rgba(28,30,40,0.066)">:</div>
<div class="wm" style="left:1709.8px;top:679.8px;font-size:21.8px;line-height:24px;font-weight:bold;letter-spacing:0.35px;color:rgba(28,30,40,0.066)">4006-6500-27</div>
<div class="wm" style="left:1655.3px;top:707.5px;font-size:19px;line-height:24px;font-weight:bold;color:rgba(28,30,40,0.066)">网址</div>
<div class="wm" style="left:1694.3px;top:707.5px;font-size:18px;line-height:24px;font-weight:bold;color:rgba(28,30,40,0.066)">:</div>
<div class="wm" style="left:1709.8px;top:707.5px;font-size:17px;line-height:24px;font-weight:bold;letter-spacing:0px;color:rgba(28,30,40,0.066)">www.tdxsoft.com</div>
<div class="wm" style="left:1926.1px;top:679.8px;font-size:19px;line-height:24px;font-weight:bold;color:rgba(28,30,40,0.066)">电话</div>
<div class="wm" style="left:1965.1px;top:679.8px;font-size:18px;line-height:24px;font-weight:bold;color:rgba(28,30,40,0.066)">:</div>
<div class="wm" style="left:1980.6px;top:679.8px;font-size:21.8px;line-height:24px;font-weight:bold;letter-spacing:0.35px;color:rgba(28,30,40,0.066)">4006-6500-27</div>
<div class="wm" style="left:1926.1px;top:707.5px;font-size:19px;line-height:24px;font-weight:bold;color:rgba(28,30,40,0.066)">网址</div>
<div class="wm" style="left:1965.1px;top:707.5px;font-size:18px;line-height:24px;font-weight:bold;color:rgba(28,30,40,0.066)">:</div>
<div class="wm" style="left:1980.6px;top:707.5px;font-size:17px;line-height:24px;font-weight:bold;letter-spacing:0px;color:rgba(28,30,40,0.066)">www.tdxsoft.com</div>
<div class="wm" style="left:30.5px;top:789.8px;font-size:19px;line-height:24px;font-weight:bold;color:rgba(28,30,40,0.066)">电话</div>
<div class="wm" style="left:69.5px;top:789.8px;font-size:18px;line-height:24px;font-weight:bold;color:rgba(28,30,40,0.066)">:</div>
<div class="wm" style="left:85.0px;top:789.8px;font-size:21.8px;line-height:24px;font-weight:bold;letter-spacing:0.35px;color:rgba(28,30,40,0.066)">4006-6500-27</div>
<div class="wm" style="left:30.5px;top:817.5px;font-size:19px;line-height:24px;font-weight:bold;color:rgba(28,30,40,0.066)">网址</div>
<div class="wm" style="left:69.5px;top:817.5px;font-size:18px;line-height:24px;font-weight:bold;color:rgba(28,30,40,0.066)">:</div>
<div class="wm" style="left:85.0px;top:817.5px;font-size:17px;line-height:24px;font-weight:bold;letter-spacing:0px;color:rgba(28,30,40,0.066)">www.tdxsoft.com</div>
<div class="wm" style="left:301.3px;top:789.8px;font-size:19px;line-height:24px;font-weight:bold;color:rgba(28,30,40,0.066)">电话</div>
<div class="wm" style="left:340.3px;top:789.8px;font-size:18px;line-height:24px;font-weight:bold;color:rgba(28,30,40,0.066)">:</div>
<div class="wm" style="left:355.8px;top:789.8px;font-size:21.8px;line-height:24px;font-weight:bold;letter-spacing:0.35px;color:rgba(28,30,40,0.066)">4006-6500-27</div>
<div class="wm" style="left:301.3px;top:817.5px;font-size:19px;line-height:24px;font-weight:bold;color:rgba(28,30,40,0.066)">网址</div>
<div class="wm" style="left:340.3px;top:817.5px;font-size:18px;line-height:24px;font-weight:bold;color:rgba(28,30,40,0.066)">:</div>
<div class="wm" style="left:355.8px;top:817.5px;font-size:17px;line-height:24px;font-weight:bold;letter-spacing:0px;color:rgba(28,30,40,0.066)">www.tdxsoft.com</div>
<div class="wm" style="left:572.1px;top:789.8px;font-size:19px;line-height:24px;font-weight:bold;color:rgba(28,30,40,0.066)">电话</div>
<div class="wm" style="left:611.1px;top:789.8px;font-size:18px;line-height:24px;font-weight:bold;color:rgba(28,30,40,0.066)">:</div>
<div class="wm" style="left:626.6px;top:789.8px;font-size:21.8px;line-height:24px;font-weight:bold;letter-spacing:0.35px;color:rgba(28,30,40,0.066)">4006-6500-27</div>
<div class="wm" style="left:572.1px;top:817.5px;font-size:19px;line-height:24px;font-weight:bold;color:rgba(28,30,40,0.066)">网址</div>
<div class="wm" style="left:611.1px;top:817.5px;font-size:18px;line-height:24px;font-weight:bold;color:rgba(28,30,40,0.066)">:</div>
<div class="wm" style="left:626.6px;top:817.5px;font-size:17px;line-height:24px;font-weight:bold;letter-spacing:0px;color:rgba(28,30,40,0.066)">www.tdxsoft.com</div>
<div class="wm" style="left:842.9px;top:789.8px;font-size:19px;line-height:24px;font-weight:bold;color:rgba(28,30,40,0.066)">电话</div>
<div class="wm" style="left:881.9px;top:789.8px;font-size:18px;line-height:24px;font-weight:bold;color:rgba(28,30,40,0.066)">:</div>
<div class="wm" style="left:897.4px;top:789.8px;font-size:21.8px;line-height:24px;font-weight:bold;letter-spacing:0.35px;color:rgba(28,30,40,0.066)">4006-6500-27</div>
<div class="wm" style="left:842.9px;top:817.5px;font-size:19px;line-height:24px;font-weight:bold;color:rgba(28,30,40,0.066)">网址</div>
<div class="wm" style="left:881.9px;top:817.5px;font-size:18px;line-height:24px;font-weight:bold;color:rgba(28,30,40,0.066)">:</div>
<div class="wm" style="left:897.4px;top:817.5px;font-size:17px;line-height:24px;font-weight:bold;letter-spacing:0px;color:rgba(28,30,40,0.066)">www.tdxsoft.com</div>
<div class="wm" style="left:1113.7px;top:789.8px;font-size:19px;line-height:24px;font-weight:bold;color:rgba(28,30,40,0.066)">电话</div>
<div class="wm" style="left:1152.7px;top:789.8px;font-size:18px;line-height:24px;font-weight:bold;color:rgba(28,30,40,0.066)">:</div>
<div class="wm" style="left:1168.2px;top:789.8px;font-size:21.8px;line-height:24px;font-weight:bold;letter-spacing:0.35px;color:rgba(28,30,40,0.066)">4006-6500-27</div>
<div class="wm" style="left:1113.7px;top:817.5px;font-size:19px;line-height:24px;font-weight:bold;color:rgba(28,30,40,0.066)">网址</div>
<div class="wm" style="left:1152.7px;top:817.5px;font-size:18px;line-height:24px;font-weight:bold;color:rgba(28,30,40,0.066)">:</div>
<div class="wm" style="left:1168.2px;top:817.5px;font-size:17px;line-height:24px;font-weight:bold;letter-spacing:0px;color:rgba(28,30,40,0.066)">www.tdxsoft.com</div>
<div class="wm" style="left:1384.5px;top:789.8px;font-size:19px;line-height:24px;font-weight:bold;color:rgba(28,30,40,0.066)">电话</div>
<div class="wm" style="left:1423.5px;top:789.8px;font-size:18px;line-height:24px;font-weight:bold;color:rgba(28,30,40,0.066)">:</div>
<div class="wm" style="left:1439.0px;top:789.8px;font-size:21.8px;line-height:24px;font-weight:bold;letter-spacing:0.35px;color:rgba(28,30,40,0.066)">4006-6500-27</div>
<div class="wm" style="left:1384.5px;top:817.5px;font-size:19px;line-height:24px;font-weight:bold;color:rgba(28,30,40,0.066)">网址</div>
<div class="wm" style="left:1423.5px;top:817.5px;font-size:18px;line-height:24px;font-weight:bold;color:rgba(28,30,40,0.066)">:</div>
<div class="wm" style="left:1439.0px;top:817.5px;font-size:17px;line-height:24px;font-weight:bold;letter-spacing:0px;color:rgba(28,30,40,0.066)">www.tdxsoft.com</div>
<div class="wm" style="left:1655.3px;top:789.8px;font-size:19px;line-height:24px;font-weight:bold;color:rgba(28,30,40,0.066)">电话</div>
<div class="wm" style="left:1694.3px;top:789.8px;font-size:18px;line-height:24px;font-weight:bold;color:rgba(28,30,40,0.066)">:</div>
<div class="wm" style="left:1709.8px;top:789.8px;font-size:21.8px;line-height:24px;font-weight:bold;letter-spacing:0.35px;color:rgba(28,30,40,0.066)">4006-6500-27</div>
<div class="wm" style="left:1655.3px;top:817.5px;font-size:19px;line-height:24px;font-weight:bold;color:rgba(28,30,40,0.066)">网址</div>
<div class="wm" style="left:1694.3px;top:817.5px;font-size:18px;line-height:24px;font-weight:bold;color:rgba(28,30,40,0.066)">:</div>
<div class="wm" style="left:1709.8px;top:817.5px;font-size:17px;line-height:24px;font-weight:bold;letter-spacing:0px;color:rgba(28,30,40,0.066)">www.tdxsoft.com</div>
<div class="wm" style="left:1926.1px;top:789.8px;font-size:19px;line-height:24px;font-weight:bold;color:rgba(28,30,40,0.066)">电话</div>
<div class="wm" style="left:1965.1px;top:789.8px;font-size:18px;line-height:24px;font-weight:bold;color:rgba(28,30,40,0.066)">:</div>
<div class="wm" style="left:1980.6px;top:789.8px;font-size:21.8px;line-height:24px;font-weight:bold;letter-spacing:0.35px;color:rgba(28,30,40,0.066)">4006-6500-27</div>
<div class="wm" style="left:1926.1px;top:817.5px;font-size:19px;line-height:24px;font-weight:bold;color:rgba(28,30,40,0.066)">网址</div>
<div class="wm" style="left:1965.1px;top:817.5px;font-size:18px;line-height:24px;font-weight:bold;color:rgba(28,30,40,0.066)">:</div>
<div class="wm" style="left:1980.6px;top:817.5px;font-size:17px;line-height:24px;font-weight:bold;letter-spacing:0px;color:rgba(28,30,40,0.066)">www.tdxsoft.com</div>
<div class="wm" style="left:30.5px;top:899.8px;font-size:19px;line-height:24px;font-weight:bold;color:rgba(28,30,40,0.066)">电话</div>
<div class="wm" style="left:69.5px;top:899.8px;font-size:18px;line-height:24px;font-weight:bold;color:rgba(28,30,40,0.066)">:</div>
<div class="wm" style="left:85.0px;top:899.8px;font-size:21.8px;line-height:24px;font-weight:bold;letter-spacing:0.35px;color:rgba(28,30,40,0.066)">4006-6500-27</div>
<div class="wm" style="left:30.5px;top:927.5px;font-size:19px;line-height:24px;font-weight:bold;color:rgba(28,30,40,0.066)">网址</div>
<div class="wm" style="left:69.5px;top:927.5px;font-size:18px;line-height:24px;font-weight:bold;color:rgba(28,30,40,0.066)">:</div>
<div class="wm" style="left:85.0px;top:927.5px;font-size:17px;line-height:24px;font-weight:bold;letter-spacing:0px;color:rgba(28,30,40,0.066)">www.tdxsoft.com</div>
<div class="wm" style="left:301.3px;top:899.8px;font-size:19px;line-height:24px;font-weight:bold;color:rgba(28,30,40,0.066)">电话</div>
<div class="wm" style="left:340.3px;top:899.8px;font-size:18px;line-height:24px;font-weight:bold;color:rgba(28,30,40,0.066)">:</div>
<div class="wm" style="left:355.8px;top:899.8px;font-size:21.8px;line-height:24px;font-weight:bold;letter-spacing:0.35px;color:rgba(28,30,40,0.066)">4006-6500-27</div>
<div class="wm" style="left:301.3px;top:927.5px;font-size:19px;line-height:24px;font-weight:bold;color:rgba(28,30,40,0.066)">网址</div>
<div class="wm" style="left:340.3px;top:927.5px;font-size:18px;line-height:24px;font-weight:bold;color:rgba(28,30,40,0.066)">:</div>
<div class="wm" style="left:355.8px;top:927.5px;font-size:17px;line-height:24px;font-weight:bold;letter-spacing:0px;color:rgba(28,30,40,0.066)">www.tdxsoft.com</div>
<div class="wm" style="left:572.1px;top:899.8px;font-size:19px;line-height:24px;font-weight:bold;color:rgba(28,30,40,0.066)">电话</div>
<div class="wm" style="left:611.1px;top:899.8px;font-size:18px;line-height:24px;font-weight:bold;color:rgba(28,30,40,0.066)">:</div>
<div class="wm" style="left:626.6px;top:899.8px;font-size:21.8px;line-height:24px;font-weight:bold;letter-spacing:0.35px;color:rgba(28,30,40,0.066)">4006-6500-27</div>
<div class="wm" style="left:572.1px;top:927.5px;font-size:19px;line-height:24px;font-weight:bold;color:rgba(28,30,40,0.066)">网址</div>
<div class="wm" style="left:611.1px;top:927.5px;font-size:18px;line-height:24px;font-weight:bold;color:rgba(28,30,40,0.066)">:</div>
<div class="wm" style="left:626.6px;top:927.5px;font-size:17px;line-height:24px;font-weight:bold;letter-spacing:0px;color:rgba(28,30,40,0.066)">www.tdxsoft.com</div>
<div class="wm" style="left:842.9px;top:899.8px;font-size:19px;line-height:24px;font-weight:bold;color:rgba(28,30,40,0.066)">电话</div>
<div class="wm" style="left:881.9px;top:899.8px;font-size:18px;line-height:24px;font-weight:bold;color:rgba(28,30,40,0.066)">:</div>
<div class="wm" style="left:897.4px;top:899.8px;font-size:21.8px;line-height:24px;font-weight:bold;letter-spacing:0.35px;color:rgba(28,30,40,0.066)">4006-6500-27</div>
<div class="wm" style="left:842.9px;top:927.5px;font-size:19px;line-height:24px;font-weight:bold;color:rgba(28,30,40,0.066)">网址</div>
<div class="wm" style="left:881.9px;top:927.5px;font-size:18px;line-height:24px;font-weight:bold;color:rgba(28,30,40,0.066)">:</div>
<div class="wm" style="left:897.4px;top:927.5px;font-size:17px;line-height:24px;font-weight:bold;letter-spacing:0px;color:rgba(28,30,40,0.066)">www.tdxsoft.com</div>
<div class="wm" style="left:1113.7px;top:899.8px;font-size:19px;line-height:24px;font-weight:bold;color:rgba(28,30,40,0.066)">电话</div>
<div class="wm" style="left:1152.7px;top:899.8px;font-size:18px;line-height:24px;font-weight:bold;color:rgba(28,30,40,0.066)">:</div>
<div class="wm" style="left:1168.2px;top:899.8px;font-size:21.8px;line-height:24px;font-weight:bold;letter-spacing:0.35px;color:rgba(28,30,40,0.066)">4006-6500-27</div>
<div class="wm" style="left:1113.7px;top:927.5px;font-size:19px;line-height:24px;font-weight:bold;color:rgba(28,30,40,0.066)">网址</div>
<div class="wm" style="left:1152.7px;top:927.5px;font-size:18px;line-height:24px;font-weight:bold;color:rgba(28,30,40,0.066)">:</div>
<div class="wm" style="left:1168.2px;top:927.5px;font-size:17px;line-height:24px;font-weight:bold;letter-spacing:0px;color:rgba(28,30,40,0.066)">www.tdxsoft.com</div>
<div class="wm" style="left:1384.5px;top:899.8px;font-size:19px;line-height:24px;font-weight:bold;color:rgba(28,30,40,0.066)">电话</div>
<div class="wm" style="left:1423.5px;top:899.8px;font-size:18px;line-height:24px;font-weight:bold;color:rgba(28,30,40,0.066)">:</div>
<div class="wm" style="left:1439.0px;top:899.8px;font-size:21.8px;line-height:24px;font-weight:bold;letter-spacing:0.35px;color:rgba(28,30,40,0.066)">4006-6500-27</div>
<div class="wm" style="left:1384.5px;top:927.5px;font-size:19px;line-height:24px;font-weight:bold;color:rgba(28,30,40,0.066)">网址</div>
<div class="wm" style="left:1423.5px;top:927.5px;font-size:18px;line-height:24px;font-weight:bold;color:rgba(28,30,40,0.066)">:</div>
<div class="wm" style="left:1439.0px;top:927.5px;font-size:17px;line-height:24px;font-weight:bold;letter-spacing:0px;color:rgba(28,30,40,0.066)">www.tdxsoft.com</div>
<div class="wm" style="left:1655.3px;top:899.8px;font-size:19px;line-height:24px;font-weight:bold;color:rgba(28,30,40,0.066)">电话</div>
<div class="wm" style="left:1694.3px;top:899.8px;font-size:18px;line-height:24px;font-weight:bold;color:rgba(28,30,40,0.066)">:</div>
<div class="wm" style="left:1709.8px;top:899.8px;font-size:21.8px;line-height:24px;font-weight:bold;letter-spacing:0.35px;color:rgba(28,30,40,0.066)">4006-6500-27</div>
<div class="wm" style="left:1655.3px;top:927.5px;font-size:19px;line-height:24px;font-weight:bold;color:rgba(28,30,40,0.066)">网址</div>
<div class="wm" style="left:1694.3px;top:927.5px;font-size:18px;line-height:24px;font-weight:bold;color:rgba(28,30,40,0.066)">:</div>
<div class="wm" style="left:1709.8px;top:927.5px;font-size:17px;line-height:24px;font-weight:bold;letter-spacing:0px;color:rgba(28,30,40,0.066)">www.tdxsoft.com</div>
<div class="wm" style="left:1926.1px;top:899.8px;font-size:19px;line-height:24px;font-weight:bold;color:rgba(28,30,40,0.066)">电话</div>
<div class="wm" style="left:1965.1px;top:899.8px;font-size:18px;line-height:24px;font-weight:bold;color:rgba(28,30,40,0.066)">:</div>
<div class="wm" style="left:1980.6px;top:899.8px;font-size:21.8px;line-height:24px;font-weight:bold;letter-spacing:0.35px;color:rgba(28,30,40,0.066)">4006-6500-27</div>
<div class="wm" style="left:1926.1px;top:927.5px;font-size:19px;line-height:24px;font-weight:bold;color:rgba(28,30,40,0.066)">网址</div>
<div class="wm" style="left:1965.1px;top:927.5px;font-size:18px;line-height:24px;font-weight:bold;color:rgba(28,30,40,0.066)">:</div>
<div class="wm" style="left:1980.6px;top:927.5px;font-size:17px;line-height:24px;font-weight:bold;letter-spacing:0px;color:rgba(28,30,40,0.066)">www.tdxsoft.com</div>
<div class="rb" style="left:49px;top:441px;width:74px;height:32px"></div>
<div class="dot" style="left:73px;top:421px">1</div>
<div class="rb" style="left:243px;top:57px;width:62px;height:38px"></div>
<div class="dot" style="left:261px;top:96px">2</div>
<div class="rb" style="left:214px;top:330px;width:83px;height:33px"></div>
<div class="dot" style="left:302px;top:321px">3</div>
<div class="tip" style="left:331px;top:314px;width:130px;height:34px;line-height:35px;padding-left:5px">选择对应的职员</div>
<div class="rb" style="left:1535px;top:17px;width:85px;height:30px"></div>
<div class="dot" style="left:1531px;top:59px">4</div>
<div class="tip" style="left:1560px;top:52px;width:193px;height:34px;line-height:35px;padding-left:6px">快捷搜索税控发票的权限</div>
<div class="rb" style="left:1395px;top:565px;width:105px;height:36px"></div>
<div class="dot" style="left:1478.7px;top:543.7px">5</div>
<div class="tip" style="left:1508px;top:537px;width:82px;height:34px;line-height:34px;padding-left:6px">勾选权限</div>
<div class="rb" style="left:1815px;top:229px;width:86px;height:31px"></div>
<div class="dot" style="left:1804px;top:264.5px">6</div>
<div class="rb" style="left:1264px;top:834px;width:85px;height:30px"></div>
<div class="dot" style="left:1288.6px;top:813px">7</div>
</body></html>
